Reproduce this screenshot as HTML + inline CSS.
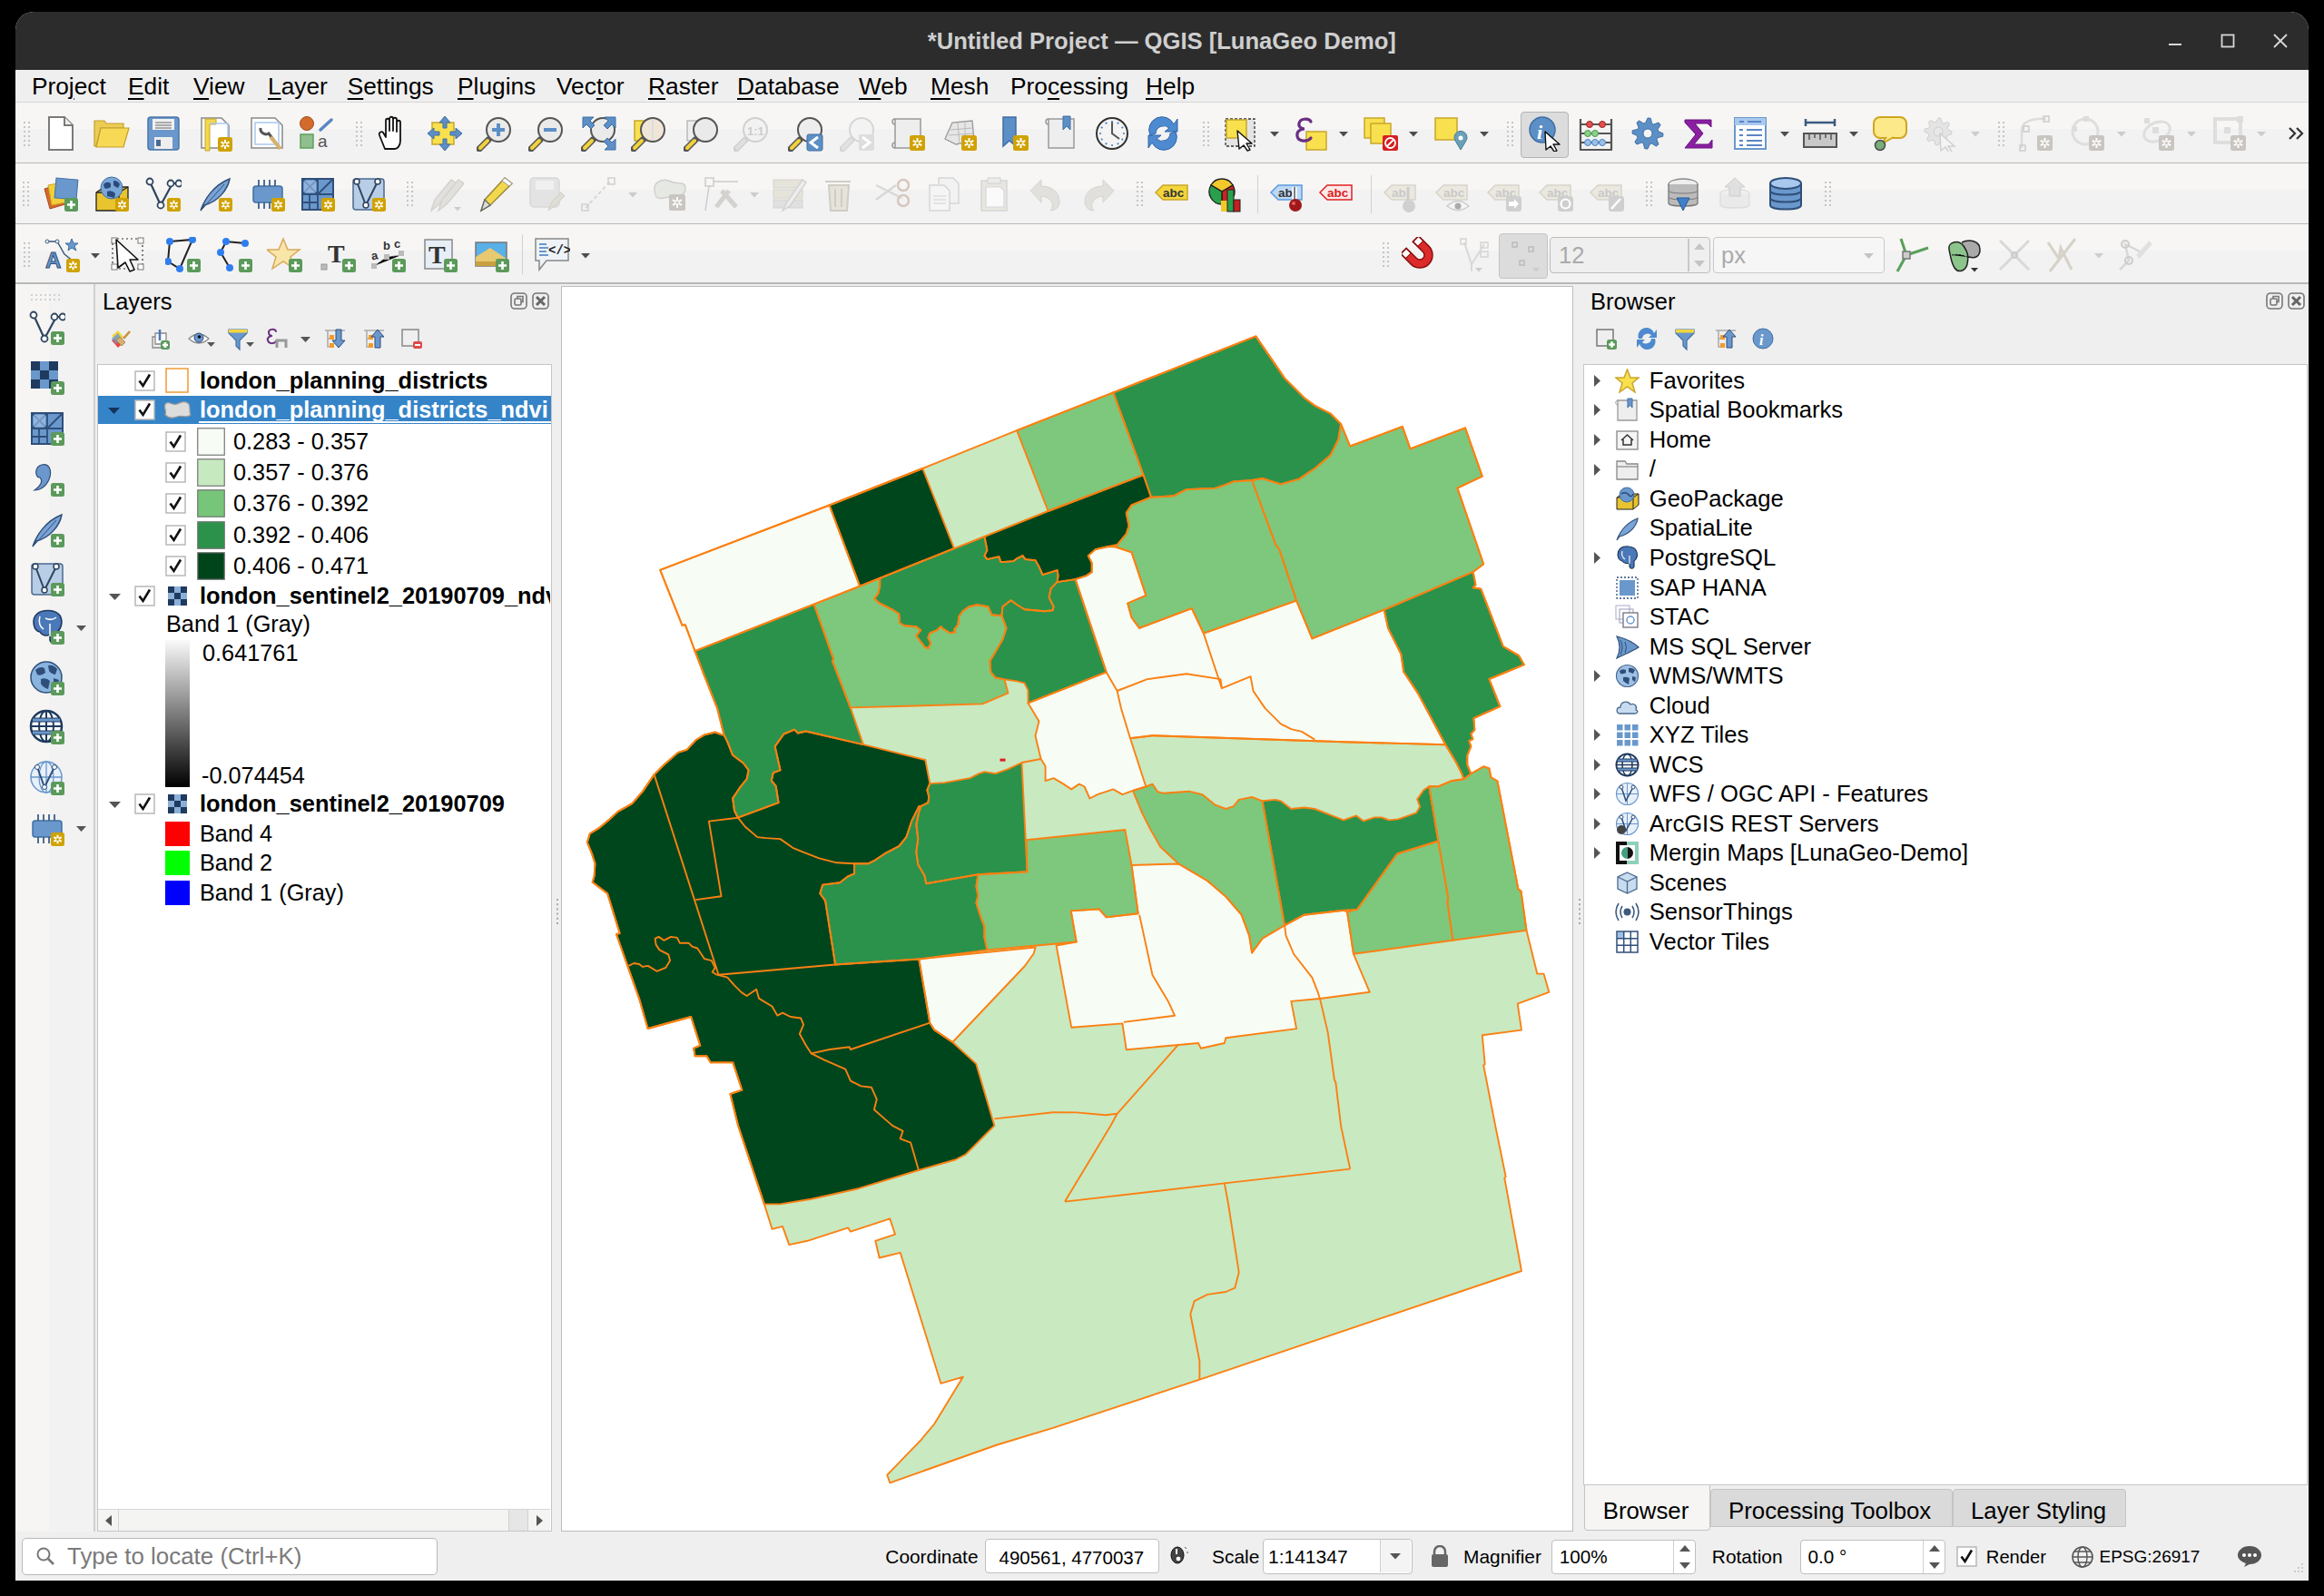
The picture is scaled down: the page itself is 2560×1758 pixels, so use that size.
<!DOCTYPE html>
<html><head><meta charset="utf-8"><style>
html,body{margin:0;padding:0;width:2560px;height:1758px;overflow:hidden;background:#000;font-family:"Liberation Sans", sans-serif;}
div{font-family:"Liberation Sans", sans-serif;}
</style></head><body>
<div style="position:absolute;left:17px;top:13px;width:2526px;height:1728px;background:#efefef;border-radius:20px 20px 0 0;overflow:hidden"></div><div style="position:absolute;left:17px;top:13px;width:2526px;height:64px;background:#2c2c2c;border-radius:20px 20px 0 0"></div><div style="position:absolute;left:1021.7px;top:20.4px;height:51.2px;font-size:25.6px;line-height:51.2px;color:#cfcfcf;font-weight:bold;white-space:nowrap;">*Untitled Project — QGIS [LunaGeo Demo]</div><svg style="position:absolute;left:2388px;top:35px;" width="18" height="18" viewBox="0 0 18 18"><line x1="1" y1="14" x2="15" y2="14" stroke="#d8d8d8" stroke-width="2"/></svg><svg style="position:absolute;left:2446px;top:37px;" width="16" height="16" viewBox="0 0 16 16"><rect x="1.5" y="1.5" width="13" height="13" fill="none" stroke="#d8d8d8" stroke-width="1.8"/></svg><svg style="position:absolute;left:2504px;top:37px;" width="16" height="16" viewBox="0 0 16 16"><path d="M1 1L15 15M15 1L1 15" stroke="#d8d8d8" stroke-width="1.8"/></svg><div style="position:absolute;left:34.9px;top:68.7px;height:52.6px;font-size:26.3px;line-height:52.6px;color:#000;font-weight:normal;white-space:nowrap;">Pro<u style="text-decoration-thickness:2px;text-underline-offset:4px">j</u>ect</div><div style="position:absolute;left:141px;top:68.7px;height:52.6px;font-size:26.3px;line-height:52.6px;color:#000;font-weight:normal;white-space:nowrap;"><u style="text-decoration-thickness:2px;text-underline-offset:4px">E</u>dit</div><div style="position:absolute;left:213px;top:68.7px;height:52.6px;font-size:26.3px;line-height:52.6px;color:#000;font-weight:normal;white-space:nowrap;"><u style="text-decoration-thickness:2px;text-underline-offset:4px">V</u>iew</div><div style="position:absolute;left:295px;top:68.7px;height:52.6px;font-size:26.3px;line-height:52.6px;color:#000;font-weight:normal;white-space:nowrap;"><u style="text-decoration-thickness:2px;text-underline-offset:4px">L</u>ayer</div><div style="position:absolute;left:382.7px;top:68.7px;height:52.6px;font-size:26.3px;line-height:52.6px;color:#000;font-weight:normal;white-space:nowrap;"><u style="text-decoration-thickness:2px;text-underline-offset:4px">S</u>ettings</div><div style="position:absolute;left:504px;top:68.7px;height:52.6px;font-size:26.3px;line-height:52.6px;color:#000;font-weight:normal;white-space:nowrap;"><u style="text-decoration-thickness:2px;text-underline-offset:4px">P</u>lugins</div><div style="position:absolute;left:613px;top:68.7px;height:52.6px;font-size:26.3px;line-height:52.6px;color:#000;font-weight:normal;white-space:nowrap;">Vec<u style="text-decoration-thickness:2px;text-underline-offset:4px">t</u>or</div><div style="position:absolute;left:714px;top:68.7px;height:52.6px;font-size:26.3px;line-height:52.6px;color:#000;font-weight:normal;white-space:nowrap;"><u style="text-decoration-thickness:2px;text-underline-offset:4px">R</u>aster</div><div style="position:absolute;left:812px;top:68.7px;height:52.6px;font-size:26.3px;line-height:52.6px;color:#000;font-weight:normal;white-space:nowrap;"><u style="text-decoration-thickness:2px;text-underline-offset:4px">D</u>atabase</div><div style="position:absolute;left:946px;top:68.7px;height:52.6px;font-size:26.3px;line-height:52.6px;color:#000;font-weight:normal;white-space:nowrap;"><u style="text-decoration-thickness:2px;text-underline-offset:4px">W</u>eb</div><div style="position:absolute;left:1025px;top:68.7px;height:52.6px;font-size:26.3px;line-height:52.6px;color:#000;font-weight:normal;white-space:nowrap;"><u style="text-decoration-thickness:2px;text-underline-offset:4px">M</u>esh</div><div style="position:absolute;left:1113px;top:68.7px;height:52.6px;font-size:26.3px;line-height:52.6px;color:#000;font-weight:normal;white-space:nowrap;">Pro<u style="text-decoration-thickness:2px;text-underline-offset:4px">c</u>essing</div><div style="position:absolute;left:1262px;top:68.7px;height:52.6px;font-size:26.3px;line-height:52.6px;color:#000;font-weight:normal;white-space:nowrap;"><u style="text-decoration-thickness:2px;text-underline-offset:4px">H</u>elp</div><div style="position:absolute;left:17px;top:113px;width:2526px;height:200px;background:#f2f2f2"></div><div style="position:absolute;left:17px;top:113px;width:2526px;height:29px;background:#f7f6f4"></div><div style="position:absolute;left:17px;top:180px;width:2526px;height:29px;background:#f7f6f4"></div><div style="position:absolute;left:17px;top:247px;width:2526px;height:29px;background:#f7f6f4"></div><div style="position:absolute;left:17px;top:111.8px;width:2526px;height:1.2px;background:#d6d6d6"></div><div style="position:absolute;left:17px;top:178.6px;width:2526px;height:1.6px;background:#b9b9b9"></div><div style="position:absolute;left:17px;top:245.6px;width:2526px;height:1.6px;background:#b9b9b9"></div><div style="position:absolute;left:17px;top:311px;width:2526px;height:1.6px;background:#b9b9b9"></div><div style="position:absolute;left:1675px;top:122.5px;width:53px;height:51.5px;background:#dcdcdc;border:1.5px solid #b4b4b4;border-radius:4px;box-sizing:border-box"></div><svg style="position:absolute;left:1681.5px;top:127.0px" width="40" height="40" viewBox="0 0 40 40"><circle cx="17" cy="16" r="14" fill="#5c8fc6" stroke="#3f6fa4" stroke-width="1.5"/><text x="11" y="26" font-size="22" font-style="italic" font-weight="bold" font-family="Liberation Serif" fill="#fff">i</text><path d="M20 18L36 32L29 32L33 39L30 40L26 34L21 38Z" fill="#fff" stroke="#111" stroke-width="1.4" stroke-linejoin="round"/></svg><svg style="position:absolute;left:46.7px;top:127.0px" width="40" height="40" viewBox="0 0 40 40"><path d="M7 2H24L33 11V38H7Z" fill="#fff" stroke="#7a7a7a" stroke-width="2"/><path d="M24 2V11H33" fill="#eee" stroke="#7a7a7a" stroke-width="2"/></svg><svg style="position:absolute;left:103.1px;top:127.0px" width="40" height="40" viewBox="0 0 40 40"><path d="M1 6H12L14 9H33V14H8L3 34H1Z" fill="#eccc54" stroke="#c39f2c" stroke-width="1.2"/><path d="M8 14H39L33 35H3Z" fill="#f7d955" stroke="#c39f2c" stroke-width="1.2"/></svg><svg style="position:absolute;left:160.0px;top:127.0px" width="40" height="40" viewBox="0 0 40 40"><rect x="3" y="2" width="34" height="36" rx="3" fill="#6a98cc" stroke="#4b76a6" stroke-width="1.5"/><rect x="8" y="4" width="24" height="12" fill="#f0f0f0"/><path d="M11 8H29M11 11H29M11 14H29" stroke="#666" stroke-width="1.2"/><rect x="10" y="24" width="20" height="13" fill="#eee"/><rect x="12" y="27" width="5" height="7" fill="#4b6a94"/></svg><svg style="position:absolute;left:217.3px;top:127.0px" width="40" height="40" viewBox="0 0 40 40"><path d="M5 3H27L35 11V36H5Z" fill="#fff" stroke="#888" stroke-width="1.5"/><path d="M9 4H21V10H14V39H9Z" fill="#f3d84d" stroke="#c9a72b" stroke-width="1"/><path d="M14 9H34V30" fill="none" stroke="#a8c8ee" stroke-width="1.5"/><rect x="23" y="24" width="16" height="16" rx="2.5" fill="#d0a200"/><path d="M31.0 26.88V37.12M26.5456 29.44L35.4544 34.56M26.5456 34.56L35.4544 29.44" stroke="#fff" stroke-width="2"/><circle cx="31.0" cy="32.0" r="1.6" fill="#d0a200"/></svg><svg style="position:absolute;left:273.7px;top:127.0px" width="40" height="40" viewBox="0 0 40 40"><path d="M3 3H29L37 11V36H3Z" fill="#fff" stroke="#888" stroke-width="1.5"/><rect x="7" y="8" width="26" height="24" fill="none" stroke="#a8c8ee" stroke-width="1.5"/><path d="M13 14A6 6 0 0 0 22 20L34 36" stroke="#555" stroke-width="3" fill="none"/><path d="M24 24L35 37" stroke="#d9b26a" stroke-width="4"/></svg><svg style="position:absolute;left:329.2px;top:127.0px" width="40" height="40" viewBox="0 0 40 40"><circle cx="9" cy="9" r="7.5" fill="#d26b2b" stroke="#a04e1e" stroke-width="1"/><path d="M24 16L36 5" stroke="#5a86c4" stroke-width="3.5" stroke-linecap="round"/><rect x="2" y="21" width="14" height="15" fill="#8fbf8f" stroke="#5f9f5f" stroke-width="1.5"/><text x="21" y="35" font-size="19" font-family="Liberation Sans" fill="#555">a</text></svg><svg style="position:absolute;left:414.4px;top:127.0px" width="40" height="40" viewBox="0 0 40 40"><path d="M10 37L4 22C3 19 6 17 8 19L11 24V6C11 3 15 3 15 6V17V4C15 1 19 1 19 4V17V5C19 2 23 2 23 5V18V8C23 5 27 5 27 8V28C27 33 24 37 21 37Z" fill="#fff" stroke="#111" stroke-width="1.8" stroke-linejoin="round"/></svg><svg style="position:absolute;left:469.8px;top:127.0px" width="40" height="40" viewBox="0 0 40 40"><rect x="6" y="8" width="24" height="24" fill="#f8e04e" stroke="#c9a72b" stroke-width="1.5"/><path d="M20 1L26 8H22V14H18V8H14Z M20 39L26 32H22V26H18V32H14Z M1 20L8 14V18H14V22H8V26Z M39 20L32 14V18H26V22H32V26Z" fill="#5c8fc6" stroke="#3f6fa4" stroke-width="1"/></svg><svg style="position:absolute;left:525.4px;top:127.0px" width="40" height="40" viewBox="0 0 40 40"><path d="M3 37L13 27" stroke="#555" stroke-width="7" stroke-linecap="round"/><path d="M4 36L12 28" stroke="#f1d23b" stroke-width="4" stroke-linecap="round"/><circle cx="24" cy="16" r="13" fill="#eaeaea" stroke="#555" stroke-width="2"/><path d="M24 9V23M17 16H31" stroke="#5c8fc6" stroke-width="4"/></svg><svg style="position:absolute;left:582.2px;top:127.0px" width="40" height="40" viewBox="0 0 40 40"><path d="M3 37L13 27" stroke="#555" stroke-width="7" stroke-linecap="round"/><path d="M4 36L12 28" stroke="#f1d23b" stroke-width="4" stroke-linecap="round"/><circle cx="24" cy="16" r="13" fill="#eaeaea" stroke="#555" stroke-width="2"/><path d="M17 16H31" stroke="#5c8fc6" stroke-width="4"/></svg><svg style="position:absolute;left:640.0px;top:127.0px" width="40" height="40" viewBox="0 0 40 40"><path d="M3 37L13 27" stroke="#555" stroke-width="7" stroke-linecap="round"/><path d="M4 36L12 28" stroke="#f1d23b" stroke-width="4" stroke-linecap="round"/><circle cx="24" cy="16" r="13" fill="#eaeaea" stroke="#555" stroke-width="2"/><path d="M2 2H14L10 6L15 11L11 15L6 10L2 14Z M38 2H26L30 6L25 11L29 15L34 10L38 14Z M38 38H26L30 34L25 29L29 25L34 30L38 26Z" fill="#5c8fc6" stroke="#3f6fa4"/></svg><svg style="position:absolute;left:695.0px;top:127.0px" width="40" height="40" viewBox="0 0 40 40"><rect x="4" y="6" width="16" height="22" fill="#f8e04e" stroke="#c9a72b" stroke-width="1.5"/><path d="M3 37L13 27" stroke="#555" stroke-width="7" stroke-linecap="round"/><path d="M4 36L12 28" stroke="#f1d23b" stroke-width="4" stroke-linecap="round"/><circle cx="24" cy="16" r="13" fill="#efe6d8" stroke="#555" stroke-width="2"/><path d="M24 5V27" stroke="#ddd" stroke-width="2"/></svg><svg style="position:absolute;left:752.6px;top:127.0px" width="40" height="40" viewBox="0 0 40 40"><rect x="4" y="6" width="16" height="22" fill="#eee" stroke="#bbb" stroke-width="1.5"/><path d="M3 37L13 27" stroke="#555" stroke-width="7" stroke-linecap="round"/><path d="M4 36L12 28" stroke="#f1d23b" stroke-width="4" stroke-linecap="round"/><circle cx="24" cy="16" r="13" fill="#eaeaea" stroke="#555" stroke-width="2"/></svg><svg style="position:absolute;left:808.3px;top:127.0px" width="40" height="40" viewBox="0 0 40 40"><path d="M3 37L13 27" stroke="#d0d0d0" stroke-width="7" stroke-linecap="round"/><path d="M4 36L12 28" stroke="#e0e0e0" stroke-width="4" stroke-linecap="round"/><circle cx="24" cy="16" r="13" fill="#f2f2f2" stroke="#d0d0d0" stroke-width="2"/><text x="15" y="22" font-size="13" font-weight="bold" font-family="Liberation Sans" fill="#ccc">1:1</text></svg><svg style="position:absolute;left:867.6px;top:127.0px" width="40" height="40" viewBox="0 0 40 40"><path d="M3 37L13 27" stroke="#555" stroke-width="7" stroke-linecap="round"/><path d="M4 36L12 28" stroke="#f1d23b" stroke-width="4" stroke-linecap="round"/><circle cx="24" cy="16" r="13" fill="#ededed" stroke="#555" stroke-width="2"/><rect x="21" y="21" width="17" height="18" rx="2" fill="#5c8fc6" stroke="#3f6fa4"/><path d="M33 24L25 30L33 36" stroke="#fff" stroke-width="3" fill="none"/></svg><svg style="position:absolute;left:924.5px;top:127.0px" width="40" height="40" viewBox="0 0 40 40"><path d="M3 37L13 27" stroke="#d6d6d6" stroke-width="7" stroke-linecap="round"/><path d="M4 36L12 28" stroke="#e2e2e2" stroke-width="4" stroke-linecap="round"/><circle cx="24" cy="16" r="13" fill="#f3f3f3" stroke="#d6d6d6" stroke-width="2"/><rect x="21" y="21" width="17" height="18" rx="2" fill="#ddd"/><path d="M25 24L33 30L25 36" stroke="#fff" stroke-width="3" fill="none"/></svg><svg style="position:absolute;left:980.3px;top:127.0px" width="40" height="40" viewBox="0 0 40 40"><path d="M6 4H34V36H6Z" fill="#eee" stroke="#999" stroke-width="1.5"/><path d="M6 4C2 4 2 10 6 10M6 30C2 30 2 36 6 36" fill="none" stroke="#999" stroke-width="1.5"/><rect x="22" y="22" width="17" height="17" rx="2.5" fill="#d0a200"/><path d="M30.5 25.06V35.94M25.7672 27.78L35.2328 33.22M25.7672 33.22L35.2328 27.78" stroke="#fff" stroke-width="2"/><circle cx="30.5" cy="30.5" r="1.6" fill="#d0a200"/></svg><svg style="position:absolute;left:1037.2px;top:127.0px" width="40" height="40" viewBox="0 0 40 40"><path d="M4 26L12 8L34 6L36 28L16 32Z" fill="#e6e6e6" stroke="#999" stroke-width="1.3"/><path d="M10 16L34 14M8 22L35 20M18 8L20 32M26 7L26 30" stroke="#bbb" stroke-width="1"/><rect x="22" y="22" width="17" height="17" rx="2.5" fill="#d0a200"/><path d="M30.5 25.06V35.94M25.7672 27.78L35.2328 33.22M25.7672 33.22L35.2328 27.78" stroke="#fff" stroke-width="2"/><circle cx="30.5" cy="30.5" r="1.6" fill="#d0a200"/></svg><svg style="position:absolute;left:1096.4px;top:127.0px" width="40" height="40" viewBox="0 0 40 40"><path d="M9 2H23V34L16 28L9 34Z" fill="#5c8fc6" stroke="#3f6fa4" stroke-width="1.5"/><rect x="20" y="22" width="17" height="17" rx="2.5" fill="#d0a200"/><path d="M28.5 25.06V35.94M23.7672 27.78L33.2328 33.22M23.7672 33.22L33.2328 27.78" stroke="#fff" stroke-width="2"/><circle cx="28.5" cy="30.5" r="1.6" fill="#d0a200"/></svg><svg style="position:absolute;left:1148.7px;top:127.0px" width="40" height="40" viewBox="0 0 40 40"><path d="M6 4H34V36H6Z" fill="#eee" stroke="#999" stroke-width="1.5"/><path d="M6 4C2 4 2 10 6 10" fill="none" stroke="#999" stroke-width="1.5"/><path d="M22 1H30V16L26 12L22 16Z" fill="#5c8fc6" stroke="#3f6fa4"/></svg><svg style="position:absolute;left:1204.5px;top:127.0px" width="40" height="40" viewBox="0 0 40 40"><circle cx="20" cy="20" r="17" fill="#f4f4f4" stroke="#333" stroke-width="2"/><path d="M20 7V20L28 26" stroke="#555" stroke-width="2" fill="none"/><circle cx="33.0" cy="20.0" r="1.1" fill="#4a7fc0"/><circle cx="31.3" cy="26.5" r="1.1" fill="#4a7fc0"/><circle cx="26.5" cy="31.3" r="1.1" fill="#4a7fc0"/><circle cx="20.0" cy="33.0" r="1.1" fill="#4a7fc0"/><circle cx="13.5" cy="31.3" r="1.1" fill="#4a7fc0"/><circle cx="8.7" cy="26.5" r="1.1" fill="#4a7fc0"/><circle cx="7.0" cy="20.0" r="1.1" fill="#4a7fc0"/><circle cx="8.7" cy="13.5" r="1.1" fill="#4a7fc0"/><circle cx="13.5" cy="8.7" r="1.1" fill="#4a7fc0"/><circle cx="20.0" cy="7.0" r="1.1" fill="#4a7fc0"/><circle cx="26.5" cy="8.7" r="1.1" fill="#4a7fc0"/><circle cx="31.3" cy="13.5" r="1.1" fill="#4a7fc0"/></svg><svg style="position:absolute;left:1261.4px;top:127.0px" width="40" height="40" viewBox="0 0 40 40"><path d="M6 22A14 14 0 0 1 32 10L36 4V18H22L27 14A9 9 0 0 0 12 20Z" fill="#4d8ad0" stroke="#2f66a8" stroke-width="1"/><path d="M34 18A14 14 0 0 1 8 30L4 36V22H18L13 26A9 9 0 0 0 28 20Z" fill="#4d8ad0" stroke="#2f66a8" stroke-width="1"/></svg><svg style="position:absolute;left:1346.5px;top:127.0px" width="40" height="40" viewBox="0 0 40 40"><rect x="3" y="4" width="32" height="30" fill="#e4e4e4" stroke="#333" stroke-width="1.3" stroke-dasharray="3 2"/><rect x="4" y="5" width="22" height="20" fill="#f8e04e" stroke="#c9a72b" stroke-width="1.5"/><path d="M16 17L32 31L26 31L30 38L27 39L23 33L18 37Z" fill="#fff" stroke="#111" stroke-width="1.4" stroke-linejoin="round"/></svg><svg style="position:absolute;left:1423.1px;top:127.0px" width="40" height="40" viewBox="0 0 40 40"><rect x="16" y="18" width="22" height="20" fill="#f8e04e" stroke="#c9a72b" stroke-width="1.5"/><path d="M21 7C19 3 9 3 8 9C7 13 11 15 14 15C9 15 5 18 6 23C7 29 17 30 21 25" fill="none" stroke="#6a2e82" stroke-width="3.2" stroke-linecap="round"/></svg><svg style="position:absolute;left:1501.0px;top:127.0px" width="40" height="40" viewBox="0 0 40 40"><rect x="2" y="3" width="22" height="22" fill="#f8e04e" stroke="#c9a72b" stroke-width="1.5"/><rect x="9" y="9" width="22" height="22" fill="#f8e04e" stroke="#c9a72b" stroke-width="1.5"/><rect x="22" y="22" width="17" height="17" rx="2" fill="#d42020"/><circle cx="30.5" cy="30.5" r="5.5" fill="none" stroke="#fff" stroke-width="1.8"/><path d="M27 34L34 27" stroke="#fff" stroke-width="1.8"/></svg><svg style="position:absolute;left:1577.6px;top:127.0px" width="40" height="40" viewBox="0 0 40 40"><rect x="3" y="3" width="24" height="24" fill="#f8e04e" stroke="#c9a72b" stroke-width="1.5"/><path d="M31 38L25 28A7 7 0 1 1 37 28Z" fill="#6aa0b8" stroke="#4a7f96"/><circle cx="31" cy="25" r="2.5" fill="#fff"/></svg><svg style="position:absolute;left:1738.0px;top:127.0px" width="40" height="40" viewBox="0 0 40 40"><path d="M3 4V38M37 4V38M2 38H38M3 10H37M3 20H37M3 30H37" stroke="#555" stroke-width="2.2" fill="none"/><circle cx="13" cy="10" r="3.5" fill="#e05050" stroke="#a02020"/><circle cx="27" cy="10" r="3.5" fill="#e05050" stroke="#a02020"/><circle cx="11" cy="20" r="3.5" fill="#8ccf8c" stroke="#4a9a4a"/><circle cx="19" cy="20" r="3.5" fill="#8ccf8c" stroke="#4a9a4a"/><circle cx="11" cy="30" r="3.5" fill="#9cc0e8" stroke="#4a7fc0"/><circle cx="19" cy="30" r="3.5" fill="#9cc0e8" stroke="#4a7fc0"/><circle cx="27" cy="30" r="3.5" fill="#9cc0e8" stroke="#4a7fc0"/></svg><svg style="position:absolute;left:1794.9px;top:127.0px" width="40" height="40" viewBox="0 0 40 40"><polygon points="37.0,20.0 36.7,23.3 31.1,24.6 30.0,26.7 32.0,32.0 29.4,34.1 24.6,31.1 22.3,31.8 20.0,37.0 16.7,36.7 15.4,31.1 13.3,30.0 8.0,32.0 5.9,29.4 8.9,24.6 8.2,22.3 3.0,20.0 3.3,16.7 8.9,15.4 10.0,13.3 8.0,8.0 10.6,5.9 15.4,8.9 17.7,8.2 20.0,3.0 23.3,3.3 24.6,8.9 26.7,10.0 32.0,8.0 34.1,10.6 31.1,15.4 31.8,17.7" fill="#5c8fc6" stroke="#3f6fa4" stroke-width="1" stroke-linejoin="round"/><circle cx="20" cy="20" r="5" fill="#f5f5f4" stroke="#3f6fa4"/></svg><svg style="position:absolute;left:1851.4px;top:127.0px" width="40" height="40" viewBox="0 0 40 40"><path d="M5 5H34V13L30 9H16L25 20L15 32H31L35 27V36H5L17 21L5 8Z" fill="#8b1fa0" stroke="#6a1080" stroke-width="1"/></svg><svg style="position:absolute;left:1907.8px;top:127.0px" width="40" height="40" viewBox="0 0 40 40"><rect x="3" y="3" width="34" height="34" fill="#fff" stroke="#6a98cc" stroke-width="2"/><rect x="3" y="3" width="34" height="8" fill="#a8c8ee"/><path d="M8 7H13M17 7H32M8 16H12M16 16H33M8 22H12M16 22H33M8 28H12M16 28H33M8 33H12M16 33H33" stroke="#5a86c4" stroke-width="2"/></svg><svg style="position:absolute;left:1985.0px;top:127.0px" width="40" height="40" viewBox="0 0 40 40"><path d="M4 8H36M4 4V12M36 4V12" stroke="#3c5a80" stroke-width="2.5"/><rect x="2" y="20" width="36" height="15" fill="#c8c8c8" stroke="#555" stroke-width="2"/><path d="M8 20V27M14 20V25M20 20V27M26 20V25M32 20V27" stroke="#555" stroke-width="1.5"/></svg><svg style="position:absolute;left:2061.6px;top:127.0px" width="40" height="40" viewBox="0 0 40 40"><rect x="2" y="2" width="36" height="23" rx="7" fill="#fbe98a" stroke="#d0a520" stroke-width="2"/><path d="M16 24L10 32L24 24" fill="#fbe98a" stroke="#d0a520" stroke-width="2"/><circle cx="9" cy="33" r="5.5" fill="#79ad79" stroke="#4a4a4a" stroke-width="1.5"/></svg><svg style="position:absolute;left:2117.4px;top:127.0px" width="40" height="40" viewBox="0 0 40 40"><polygon points="33.0,18.0 32.7,20.9 28.2,22.2 27.1,24.1 28.6,28.6 26.3,30.5 22.2,28.2 20.1,28.8 18.0,33.0 15.1,32.7 13.8,28.2 11.9,27.1 7.4,28.6 5.5,26.3 7.8,22.2 7.2,20.1 3.0,18.0 3.3,15.1 7.8,13.8 8.9,11.9 7.4,7.4 9.7,5.5 13.8,7.8 15.9,7.2 18.0,3.0 20.9,3.3 22.2,7.8 24.1,8.9 28.6,7.4 30.5,9.7 28.2,13.8 28.8,15.9" fill="#e4e4e4" stroke="#cfcfcf" stroke-width="1" stroke-linejoin="round"/><circle cx="18" cy="18" r="5" fill="#e8e8e8" stroke="#cfcfcf"/><path d="M20 20L36 34L29 34L33 40L30 41L26 35L21 39Z" fill="#f4f4f4" stroke="#cfcfcf" stroke-width="1.4"/></svg><svg style="position:absolute;left:2222.0px;top:127.0px" width="40" height="40" viewBox="0 0 40 40"><path d="M5 36V16C5 8 15 3 32 4" fill="none" stroke="#dcdcdc" stroke-width="2.5"/><rect x="3" y="33" width="6" height="6" fill="none" stroke="#ccc" stroke-width="1.5"/><rect x="7" y="12" width="6" height="6" fill="none" stroke="#ccc" stroke-width="1.5"/><rect x="29" y="1" width="6" height="6" fill="none" stroke="#ccc" stroke-width="1.5"/><rect x="22" y="22" width="17" height="17" rx="2.5" fill="#c9c5c0"/><path d="M30.5 25.06V35.94M25.7672 27.78L35.2328 33.22M25.7672 33.22L35.2328 27.78" stroke="#fff" stroke-width="2"/><circle cx="30.5" cy="30.5" r="1.6" fill="#c9c5c0"/></svg><svg style="position:absolute;left:2278.9px;top:127.0px" width="40" height="40" viewBox="0 0 40 40"><circle cx="18" cy="18" r="14" fill="none" stroke="#dedede" stroke-width="3"/><rect x="3" y="12" width="6" height="6" fill="#ddd"/><rect x="16" y="1" width="6" height="6" fill="#ddd"/><rect x="22" y="22" width="17" height="17" rx="2.5" fill="#c9c5c0"/><path d="M30.5 25.06V35.94M25.7672 27.78L35.2328 33.22M25.7672 33.22L35.2328 27.78" stroke="#fff" stroke-width="2"/><circle cx="30.5" cy="30.5" r="1.6" fill="#c9c5c0"/></svg><svg style="position:absolute;left:2355.9px;top:127.0px" width="40" height="40" viewBox="0 0 40 40"><ellipse cx="20" cy="18" rx="15" ry="10" transform="rotate(-25 20 18)" fill="none" stroke="#dedede" stroke-width="3"/><rect x="15" y="13" width="7" height="7" fill="#ddd"/><rect x="6" y="3" width="6" height="6" fill="#ddd"/><rect x="22" y="22" width="17" height="17" rx="2.5" fill="#c9c5c0"/><path d="M30.5 25.06V35.94M25.7672 27.78L35.2328 33.22M25.7672 33.22L35.2328 27.78" stroke="#fff" stroke-width="2"/><circle cx="30.5" cy="30.5" r="1.6" fill="#c9c5c0"/></svg><svg style="position:absolute;left:2435.0px;top:127.0px" width="40" height="40" viewBox="0 0 40 40"><rect x="5" y="4" width="28" height="26" fill="none" stroke="#dedede" stroke-width="4"/><rect x="15" y="13" width="7" height="7" fill="#ddd"/><rect x="29" y="1" width="7" height="7" fill="#ddd"/><rect x="22" y="22" width="17" height="17" rx="2.5" fill="#c9c5c0"/><path d="M30.5 25.06V35.94M25.7672 27.78L35.2328 33.22M25.7672 33.22L35.2328 27.78" stroke="#fff" stroke-width="2"/><circle cx="30.5" cy="30.5" r="1.6" fill="#c9c5c0"/></svg><svg style="position:absolute;left:1398.6px;top:145.0px" width="10" height="6.0" viewBox="0 0 10 6.0"><path d="M0 0H10L5.0 5.5Z" fill="#4d4d4d"/></svg><svg style="position:absolute;left:1475.3px;top:145.0px" width="10" height="6.0" viewBox="0 0 10 6.0"><path d="M0 0H10L5.0 5.5Z" fill="#4d4d4d"/></svg><svg style="position:absolute;left:1552.0px;top:145.0px" width="10" height="6.0" viewBox="0 0 10 6.0"><path d="M0 0H10L5.0 5.5Z" fill="#4d4d4d"/></svg><svg style="position:absolute;left:1629.8px;top:145.0px" width="10" height="6.0" viewBox="0 0 10 6.0"><path d="M0 0H10L5.0 5.5Z" fill="#4d4d4d"/></svg><svg style="position:absolute;left:1960.5px;top:145.0px" width="10" height="6.0" viewBox="0 0 10 6.0"><path d="M0 0H10L5.0 5.5Z" fill="#4d4d4d"/></svg><svg style="position:absolute;left:2037.0px;top:145.0px" width="10" height="6.0" viewBox="0 0 10 6.0"><path d="M0 0H10L5.0 5.5Z" fill="#4d4d4d"/></svg><svg style="position:absolute;left:2170.7px;top:145.0px" width="10" height="6.0" viewBox="0 0 10 6.0"><path d="M0 0H10L5.0 5.5Z" fill="#cccccc"/></svg><svg style="position:absolute;left:2332.2px;top:145.0px" width="10" height="6.0" viewBox="0 0 10 6.0"><path d="M0 0H10L5.0 5.5Z" fill="#cccccc"/></svg><svg style="position:absolute;left:2409.4px;top:145.0px" width="10" height="6.0" viewBox="0 0 10 6.0"><path d="M0 0H10L5.0 5.5Z" fill="#cccccc"/></svg><svg style="position:absolute;left:2486.3px;top:145.0px" width="10" height="6.0" viewBox="0 0 10 6.0"><path d="M0 0H10L5.0 5.5Z" fill="#cccccc"/></svg><svg style="position:absolute;left:23.5px;top:131.5px" width="11" height="31" viewBox="0 0 11 31"><circle cx="3" cy="3" r="1.1" fill="#b9b9b9"/><circle cx="8" cy="3" r="1.1" fill="#b9b9b9"/><circle cx="3" cy="8" r="1.1" fill="#b9b9b9"/><circle cx="8" cy="8" r="1.1" fill="#b9b9b9"/><circle cx="3" cy="13" r="1.1" fill="#b9b9b9"/><circle cx="8" cy="13" r="1.1" fill="#b9b9b9"/><circle cx="3" cy="18" r="1.1" fill="#b9b9b9"/><circle cx="8" cy="18" r="1.1" fill="#b9b9b9"/><circle cx="3" cy="23" r="1.1" fill="#b9b9b9"/><circle cx="8" cy="23" r="1.1" fill="#b9b9b9"/><circle cx="3" cy="28" r="1.1" fill="#b9b9b9"/><circle cx="8" cy="28" r="1.1" fill="#b9b9b9"/></svg><svg style="position:absolute;left:390.0px;top:131.5px" width="11" height="31" viewBox="0 0 11 31"><circle cx="3" cy="3" r="1.1" fill="#b9b9b9"/><circle cx="8" cy="3" r="1.1" fill="#b9b9b9"/><circle cx="3" cy="8" r="1.1" fill="#b9b9b9"/><circle cx="8" cy="8" r="1.1" fill="#b9b9b9"/><circle cx="3" cy="13" r="1.1" fill="#b9b9b9"/><circle cx="8" cy="13" r="1.1" fill="#b9b9b9"/><circle cx="3" cy="18" r="1.1" fill="#b9b9b9"/><circle cx="8" cy="18" r="1.1" fill="#b9b9b9"/><circle cx="3" cy="23" r="1.1" fill="#b9b9b9"/><circle cx="8" cy="23" r="1.1" fill="#b9b9b9"/><circle cx="3" cy="28" r="1.1" fill="#b9b9b9"/><circle cx="8" cy="28" r="1.1" fill="#b9b9b9"/></svg><svg style="position:absolute;left:1322.5px;top:131.5px" width="11" height="31" viewBox="0 0 11 31"><circle cx="3" cy="3" r="1.1" fill="#b9b9b9"/><circle cx="8" cy="3" r="1.1" fill="#b9b9b9"/><circle cx="3" cy="8" r="1.1" fill="#b9b9b9"/><circle cx="8" cy="8" r="1.1" fill="#b9b9b9"/><circle cx="3" cy="13" r="1.1" fill="#b9b9b9"/><circle cx="8" cy="13" r="1.1" fill="#b9b9b9"/><circle cx="3" cy="18" r="1.1" fill="#b9b9b9"/><circle cx="8" cy="18" r="1.1" fill="#b9b9b9"/><circle cx="3" cy="23" r="1.1" fill="#b9b9b9"/><circle cx="8" cy="23" r="1.1" fill="#b9b9b9"/><circle cx="3" cy="28" r="1.1" fill="#b9b9b9"/><circle cx="8" cy="28" r="1.1" fill="#b9b9b9"/></svg><svg style="position:absolute;left:1658.4px;top:131.5px" width="11" height="31" viewBox="0 0 11 31"><circle cx="3" cy="3" r="1.1" fill="#b9b9b9"/><circle cx="8" cy="3" r="1.1" fill="#b9b9b9"/><circle cx="3" cy="8" r="1.1" fill="#b9b9b9"/><circle cx="8" cy="8" r="1.1" fill="#b9b9b9"/><circle cx="3" cy="13" r="1.1" fill="#b9b9b9"/><circle cx="8" cy="13" r="1.1" fill="#b9b9b9"/><circle cx="3" cy="18" r="1.1" fill="#b9b9b9"/><circle cx="8" cy="18" r="1.1" fill="#b9b9b9"/><circle cx="3" cy="23" r="1.1" fill="#b9b9b9"/><circle cx="8" cy="23" r="1.1" fill="#b9b9b9"/><circle cx="3" cy="28" r="1.1" fill="#b9b9b9"/><circle cx="8" cy="28" r="1.1" fill="#b9b9b9"/></svg><svg style="position:absolute;left:2199.3px;top:131.5px" width="11" height="31" viewBox="0 0 11 31"><circle cx="3" cy="3" r="1.1" fill="#b9b9b9"/><circle cx="8" cy="3" r="1.1" fill="#b9b9b9"/><circle cx="3" cy="8" r="1.1" fill="#b9b9b9"/><circle cx="8" cy="8" r="1.1" fill="#b9b9b9"/><circle cx="3" cy="13" r="1.1" fill="#b9b9b9"/><circle cx="8" cy="13" r="1.1" fill="#b9b9b9"/><circle cx="3" cy="18" r="1.1" fill="#b9b9b9"/><circle cx="8" cy="18" r="1.1" fill="#b9b9b9"/><circle cx="3" cy="23" r="1.1" fill="#b9b9b9"/><circle cx="8" cy="23" r="1.1" fill="#b9b9b9"/><circle cx="3" cy="28" r="1.1" fill="#b9b9b9"/><circle cx="8" cy="28" r="1.1" fill="#b9b9b9"/></svg><svg style="position:absolute;left:2519.8px;top:138.0px" width="18" height="18" viewBox="0 0 18 18"><path d="M2 3L8 9L2 15M10 3L16 9L10 15" stroke="#333" stroke-width="2.2" fill="none"/></svg><svg style="position:absolute;left:47.0px;top:193.5px" width="40" height="40" viewBox="0 0 40 40"><path d="M2 14L22 8L28 30L8 36Z" fill="#d6672c" stroke="#a84c1e"/><path d="M6 10L26 6L30 28L10 32Z" fill="#f3cf3a" stroke="#c9a72b"/><path d="M14 3H38V25H14Z" fill="#6a98cc" stroke="#3f6fa4" transform="rotate(5 26 14)"/><rect x="24" y="24" width="15" height="15" rx="2.5" fill="#5b9a5b"/><path d="M31.5 27.0V36.0M27.0 31.5H36.0" stroke="#fff" stroke-width="2.6"/></svg><svg style="position:absolute;left:103.4px;top:193.5px" width="40" height="40" viewBox="0 0 40 40"><path d="M3 18L12 12H38V32L28 38H3Z" fill="#e8c42e" stroke="#222" stroke-width="1.3"/><path d="M3 18H28V38M28 18L38 12" fill="none" stroke="#222" stroke-width="1.3"/><circle cx="20" cy="13" r="12" fill="#7aa6d8" stroke="#3f6fa4"/><path d="M11 9Q15 5 19 8L19 12Q15 15 12 13Z M22 5Q27 5 29 9L27 13Q24 12 22 10Z M15 17Q20 15 24 19L23 24L15 22Z" fill="#2a4a7a"/><rect x="24" y="24" width="15" height="15" rx="2.5" fill="#d0a200"/><path d="M31.5 26.7V36.3M27.323999999999998 29.1L35.676 33.9M27.323999999999998 33.9L35.676 29.1" stroke="#fff" stroke-width="2"/><circle cx="31.5" cy="31.5" r="1.6" fill="#d0a200"/></svg><svg style="position:absolute;left:159.6px;top:193.5px" width="40" height="40" viewBox="0 0 40 40"><path d="M5 6L17 32L30 8L38 8" fill="none" stroke="#2f4560" stroke-width="2.2"/><circle cx="5" cy="6" r="3.5" fill="#fff" stroke="#2f4560" stroke-width="1.8"/><circle cx="17" cy="32" r="3.5" fill="#fff" stroke="#2f4560" stroke-width="1.8"/><circle cx="28" cy="8" r="3.5" fill="#fff" stroke="#2f4560" stroke-width="1.8"/><circle cx="37" cy="8" r="3.5" fill="#fff" stroke="#2f4560" stroke-width="1.8"/><rect x="24" y="24" width="15" height="15" rx="2.5" fill="#d0a200"/><path d="M31.5 26.7V36.3M27.323999999999998 29.1L35.676 33.9M27.323999999999998 33.9L35.676 29.1" stroke="#fff" stroke-width="2"/><circle cx="31.5" cy="31.5" r="1.6" fill="#d0a200"/></svg><svg style="position:absolute;left:216.6px;top:193.5px" width="40" height="40" viewBox="0 0 40 40"><path d="M4 38C8 26 18 10 36 3C34 14 24 28 8 32Z" fill="#7aa3d6" stroke="#2f4f7a" stroke-width="1.5"/><path d="M6 36L30 9" stroke="#2f4f7a" stroke-width="1"/><rect x="24" y="24" width="15" height="15" rx="2.5" fill="#d0a200"/><path d="M31.5 26.7V36.3M27.323999999999998 29.1L35.676 33.9M27.323999999999998 33.9L35.676 29.1" stroke="#fff" stroke-width="2"/><circle cx="31.5" cy="31.5" r="1.6" fill="#d0a200"/></svg><svg style="position:absolute;left:274.6px;top:193.5px" width="40" height="40" viewBox="0 0 40 40"><rect x="4" y="11" width="32" height="18" rx="3" fill="#6a98cc" stroke="#3f6fa4" stroke-width="1.5"/><path d="M10 4V11M16 4V11M22 4V11M28 4V11M10 29V36M16 29V36M22 29V36M28 29V36" stroke="#3f5f8a" stroke-width="1.8"/><rect x="24" y="24" width="15" height="15" rx="2.5" fill="#d0a200"/><path d="M31.5 26.7V36.3M27.323999999999998 29.1L35.676 33.9M27.323999999999998 33.9L35.676 29.1" stroke="#fff" stroke-width="2"/><circle cx="31.5" cy="31.5" r="1.6" fill="#d0a200"/></svg><svg style="position:absolute;left:330.4px;top:193.5px" width="40" height="40" viewBox="0 0 40 40"><rect x="3" y="3" width="34" height="34" fill="#6a98cc" stroke="#2f4f7a" stroke-width="2"/><path d="M3 3L20 20M20 3L3 20M20 20L37 3M3 20H37M20 3V37M3 29H20M11 20V37" stroke="#2f4f7a" stroke-width="1.8"/><rect x="5" y="5" width="13" height="13" fill="#a8c8ee" opacity=".6"/><rect x="24" y="24" width="15" height="15" rx="2.5" fill="#d0a200"/><path d="M31.5 26.7V36.3M27.323999999999998 29.1L35.676 33.9M27.323999999999998 33.9L35.676 29.1" stroke="#fff" stroke-width="2"/><circle cx="31.5" cy="31.5" r="1.6" fill="#d0a200"/></svg><svg style="position:absolute;left:386.2px;top:193.5px" width="40" height="40" viewBox="0 0 40 40"><rect x="3" y="3" width="34" height="34" rx="3" fill="#b8cde6" stroke="#4a6a90" stroke-width="1.5"/><path d="M7 6L17 32L30 6" fill="none" stroke="#2f4560" stroke-width="2"/><circle cx="7" cy="6" r="3" fill="#fff" stroke="#2f4560" stroke-width="1.5"/><circle cx="17" cy="32" r="3" fill="#fff" stroke="#2f4560" stroke-width="1.5"/><circle cx="30" cy="6" r="3" fill="#fff" stroke="#2f4560" stroke-width="1.5"/><rect x="24" y="24" width="15" height="15" rx="2.5" fill="#d0a200"/><path d="M31.5 26.7V36.3M27.323999999999998 29.1L35.676 33.9M27.323999999999998 33.9L35.676 29.1" stroke="#fff" stroke-width="2"/><circle cx="31.5" cy="31.5" r="1.6" fill="#d0a200"/></svg><svg style="position:absolute;left:471.0px;top:193.5px" width="40" height="40" viewBox="0 0 40 40"><path d="M4 38L8 26L26 4L32 8L14 30Z" fill="#e2e0dc" stroke="#d4d2ce" stroke-width="1.5"/><path d="M12 38L16 26L34 4L40 8L22 30Z" fill="#e2e0dc" stroke="#d4d2ce" stroke-width="1.5"/></svg><svg style="position:absolute;left:526.3px;top:193.5px" width="40" height="40" viewBox="0 0 40 40"><path d="M4 38L8 26L30 2L38 8L14 32Z" fill="#f3d84d" stroke="#9a8a3a" stroke-width="1.5"/><path d="M4 38L8 26L14 32Z" fill="#ddd" stroke="#666" stroke-width="1.3"/><path d="M30 2L38 8L35 11L27 5Z" fill="#fff" stroke="#999"/></svg><svg style="position:absolute;left:582.0px;top:193.5px" width="40" height="40" viewBox="0 0 40 40"><rect x="2" y="2" width="32" height="32" rx="4" fill="#e3e3e3" stroke="#d8d8d8" stroke-width="1.5"/><rect x="8" y="5" width="20" height="10" fill="#f0f0f0"/><path d="M22 38L26 28L36 18L40 22L30 32Z" fill="#e0ddd6" stroke="#d0cdc6"/></svg><svg style="position:absolute;left:640.1px;top:193.5px" width="40" height="40" viewBox="0 0 40 40"><path d="M5 35L33 5" stroke="#d6d6d6" stroke-width="2" stroke-dasharray="4 3"/><rect x="1" y="31" width="7" height="7" fill="none" stroke="#d0d0d0" stroke-width="1.5"/><rect x="30" y="2" width="7" height="7" fill="none" stroke="#d0d0d0" stroke-width="1.5"/></svg><svg style="position:absolute;left:716.8px;top:193.5px" width="40" height="40" viewBox="0 0 40 40"><path d="M4 16C2 6 14 2 22 6C30 10 38 4 38 14C38 24 24 22 14 24C6 26 5 22 4 16Z" fill="#e6e8e4" stroke="#d0d0d0" stroke-width="1.5"/><rect x="20" y="20" width="18" height="18" rx="2.5" fill="#c9c5c0"/><path d="M29.0 23.240000000000002V34.76M23.9888 26.12L34.0112 31.88M23.9888 31.88L34.0112 26.12" stroke="#fff" stroke-width="2"/><circle cx="29.0" cy="29.0" r="1.6" fill="#c9c5c0"/></svg><svg style="position:absolute;left:774.9px;top:193.5px" width="40" height="40" viewBox="0 0 40 40"><rect x="2" y="2" width="9" height="9" fill="none" stroke="#ccc" stroke-width="1.5"/><path d="M6 11L2 38M11 6H38" stroke="#ccc" stroke-width="1.5"/><path d="M14 34L28 16M20 16L36 34" stroke="#d4d2ce" stroke-width="5"/></svg><svg style="position:absolute;left:850.4px;top:193.5px" width="40" height="40" viewBox="0 0 40 40"><rect x="2" y="4" width="32" height="9" fill="#e6e3da" stroke="#d6d3cc"/><rect x="2" y="15" width="32" height="9" fill="#e6e3da" stroke="#d6d3cc"/><rect x="2" y="26" width="32" height="9" fill="#e0e0e0" stroke="#d6d3cc"/><path d="M12 38L16 30L34 4L38 7L20 33Z" fill="#ececec" stroke="#cfcfcf" stroke-width="1.3"/></svg><svg style="position:absolute;left:905.0px;top:193.5px" width="40" height="40" viewBox="0 0 40 40"><path d="M4 6H32M8 10H30L28 38H10Z" fill="#e6e3da" stroke="#d0cdc6" stroke-width="2"/><path d="M15 14V34M22 14V34" stroke="#d0cdc6" stroke-width="2"/></svg><svg style="position:absolute;left:963.0px;top:193.5px" width="40" height="40" viewBox="0 0 40 40"><path d="M2 10L30 24M2 26L24 10" stroke="#d8d8d8" stroke-width="2.5"/><circle cx="32" cy="10" r="6" fill="none" stroke="#d6c8c0" stroke-width="2.5"/><circle cx="32" cy="27" r="6" fill="none" stroke="#d6c8c0" stroke-width="2.5"/></svg><svg style="position:absolute;left:1020.0px;top:193.5px" width="40" height="40" viewBox="0 0 40 40"><path d="M14 2H30L36 8V30H14Z" fill="#f2f2f2" stroke="#d6d6d6" stroke-width="1.5"/><path d="M4 10H20L26 16V38H4Z" fill="#f5f5f5" stroke="#d6d6d6" stroke-width="1.5"/><path d="M8 22H22M8 26H22M8 30H22" stroke="#ddd" stroke-width="1.3"/></svg><svg style="position:absolute;left:1076.0px;top:193.5px" width="40" height="40" viewBox="0 0 40 40"><rect x="5" y="5" width="28" height="33" fill="#e8e6e0" stroke="#d6d6d6" stroke-width="1.5"/><rect x="12" y="2" width="14" height="6" fill="#ececec" stroke="#d0d0d0"/><path d="M10 12H26L30 16V34H10Z" fill="#fafafa" stroke="#d6d6d6" stroke-width="1.2"/></svg><svg style="position:absolute;left:1132.9px;top:193.5px" width="40" height="40" viewBox="0 0 40 40"><path d="M2 16L14 4V11C26 11 34 18 34 28C34 34 30 38 24 38C28 34 28 24 14 22V29Z" fill="#e2e0dc" stroke="#d6d4d0"/></svg><svg style="position:absolute;left:1188.7px;top:193.5px" width="40" height="40" viewBox="0 0 40 40"><path d="M38 16L26 4V11C14 11 6 18 6 28C6 34 10 38 16 38C12 34 12 24 26 22V29Z" fill="#e2e0dc" stroke="#d6d4d0"/></svg><svg style="position:absolute;left:1271.2px;top:193.5px" width="40" height="40" viewBox="0 0 40 40"><path d="M2 18L10 10H37V26H10Z" fill="#f3d53c" stroke="#c9a72b" stroke-width="1.5"/><text x="10" y="23" font-size="13.5" font-weight="bold" font-family="Liberation Sans" fill="#333">abc</text></svg><svg style="position:absolute;left:1330.4px;top:193.5px" width="40" height="40" viewBox="0 0 40 40"><path d="M16 17L3.9 10.0A14 14 0 0 1 28.1 10.0Z" fill="#f3c82a" stroke="#222" stroke-width="1.4"/><path d="M16 17L28.1 10.0A14 14 0 0 1 16.0 31.0Z" fill="#d42020" stroke="#222" stroke-width="1.4"/><path d="M16 17L16.0 31.0A14 14 0 0 1 3.9 10.0Z" fill="#29a04a" stroke="#222" stroke-width="1.4"/><rect x="15" y="27" width="7" height="12" fill="#f3c82a"/><rect x="22" y="15" width="7" height="24" fill="#29a04a" stroke="#222"/><rect x="29" y="26" width="7" height="13" fill="#c82020" stroke="#222"/></svg><svg style="position:absolute;left:1397.8px;top:193.5px" width="40" height="40" viewBox="0 0 40 40"><path d="M2 18L10 10H36V26H10Z" fill="#bcd8f5" stroke="#5a9ae0" stroke-width="1.5"/><text x="10" y="23" font-size="13.5" font-weight="bold" font-family="Liberation Sans" fill="#333">ab</text><path d="M28 12V28" stroke="#fff" stroke-width="5"/><path d="M28 12V28" stroke="#555" stroke-width="1.5"/><circle cx="29" cy="32" r="7" fill="#a01818"/><circle cx="27" cy="30" r="2" fill="#e06060"/></svg><svg style="position:absolute;left:1452.4px;top:193.5px" width="40" height="40" viewBox="0 0 40 40"><path d="M2 18L10 10H37V26H10Z" fill="#fbeaea" stroke="#e02020" stroke-width="1.5"/><text x="10" y="23" font-size="13.5" font-weight="bold" font-family="Liberation Sans" fill="#e02020">abc</text></svg><svg style="position:absolute;left:1523.0px;top:193.5px" width="40" height="40" viewBox="0 0 40 40"><path d="M2 18L10 10H36V26H10Z" fill="#ebe8e0" stroke="#d8d4cc" stroke-width="1.5"/><text x="10" y="23" font-size="13.5" font-weight="bold" font-family="Liberation Sans" fill="#c8c8c8">ab</text><path d="M28 12V28" stroke="#ccc" stroke-width="3"/><circle cx="29" cy="33" r="7" fill="#d0d0d0"/></svg><svg style="position:absolute;left:1579.9px;top:193.5px" width="40" height="40" viewBox="0 0 40 40"><path d="M2 18L10 10H36V26H10Z" fill="#ebe8e0" stroke="#d8d4cc" stroke-width="1.5"/><text x="10" y="23" font-size="13.5" font-weight="bold" font-family="Liberation Sans" fill="#c8c8c8">abc</text><path d="M14 33Q26 22 38 33Q26 42 14 33Z" fill="#f4f4f4" stroke="#ccc" stroke-width="1.5"/><circle cx="26" cy="33" r="3.5" fill="#aaa"/></svg><svg style="position:absolute;left:1636.8px;top:193.5px" width="40" height="40" viewBox="0 0 40 40"><path d="M2 18L10 10H36V26H10Z" fill="#ebe8e0" stroke="#d8d4cc" stroke-width="1.5"/><text x="10" y="23" font-size="13.5" font-weight="bold" font-family="Liberation Sans" fill="#c8c8c8">abc</text><rect x="22" y="22" width="17" height="17" rx="3" fill="#cfcfcf"/><path d="M25 28H31V25L36 30.5L31 36V33H25Z" fill="#fff"/></svg><svg style="position:absolute;left:1693.8px;top:193.5px" width="40" height="40" viewBox="0 0 40 40"><path d="M2 18L10 10H36V26H10Z" fill="#ebe8e0" stroke="#d8d4cc" stroke-width="1.5"/><text x="10" y="23" font-size="13.5" font-weight="bold" font-family="Liberation Sans" fill="#c8c8c8">abc</text><rect x="22" y="22" width="17" height="17" rx="3" fill="#cfcfcf"/><circle cx="30.5" cy="30.5" r="5" fill="none" stroke="#fff" stroke-width="2.2"/></svg><svg style="position:absolute;left:1749.5px;top:193.5px" width="40" height="40" viewBox="0 0 40 40"><path d="M2 18L10 10H36V26H10Z" fill="#ebe8e0" stroke="#d8d4cc" stroke-width="1.5"/><text x="10" y="23" font-size="13.5" font-weight="bold" font-family="Liberation Sans" fill="#c8c8c8">abc</text><rect x="22" y="22" width="17" height="17" rx="3" fill="#cfcfcf"/><path d="M25 36L35 25" stroke="#fff" stroke-width="2.5"/></svg><svg style="position:absolute;left:1834.3px;top:193.5px" width="40" height="40" viewBox="0 0 40 40"><ellipse cx="20" cy="9" rx="16" ry="6" fill="#eee" stroke="#888" stroke-width="1.3"/><path d="M4 9V30C4 34 36 34 36 30V9" fill="#bbb" stroke="#777" stroke-width="1.3"/><path d="M4 16C4 20 36 20 36 16M4 23C4 27 36 27 36 23" fill="none" stroke="#777"/><path d="M13 24H27L20 38Z" fill="#3f7fc8" stroke="#2a5a9a"/></svg><svg style="position:absolute;left:1891.2px;top:193.5px" width="40" height="40" viewBox="0 0 40 40"><ellipse cx="20" cy="20" rx="16" ry="6" fill="#f0f0f0" stroke="#dcdcdc" stroke-width="1.3"/><path d="M4 20V32C4 36 36 36 36 32V20" fill="#eaeaea" stroke="#dcdcdc" stroke-width="1.3"/><path d="M14 22V12H9L20 2L31 12H26V22Z" fill="#e0e0e0" stroke="#ccc"/></svg><svg style="position:absolute;left:1947.0px;top:193.5px" width="40" height="40" viewBox="0 0 40 40"><path d="M3 8V32C3 38 37 38 37 32V8" fill="#6a98cc" stroke="#2f4f7a" stroke-width="2"/><ellipse cx="20" cy="8" rx="17" ry="6" fill="#a8c8ee" stroke="#2f4f7a" stroke-width="2"/><path d="M3 16C3 22 37 22 37 16M3 24C3 30 37 30 37 24" fill="none" stroke="#2f4f7a" stroke-width="2"/></svg><svg style="position:absolute;left:692.3px;top:211.5px" width="10" height="6.0" viewBox="0 0 10 6.0"><path d="M0 0H10L5.0 5.5Z" fill="#cccccc"/></svg><svg style="position:absolute;left:825.9px;top:211.5px" width="10" height="6.0" viewBox="0 0 10 6.0"><path d="M0 0H10L5.0 5.5Z" fill="#cccccc"/></svg><svg style="position:absolute;left:500.0px;top:228.1px" width="8" height="4.8" viewBox="0 0 8 4.8"><path d="M0 0H8L4.0 4.4Z" fill="#cccccc"/></svg><svg style="position:absolute;left:23.1px;top:198.0px" width="11" height="31" viewBox="0 0 11 31"><circle cx="3" cy="3" r="1.1" fill="#b9b9b9"/><circle cx="8" cy="3" r="1.1" fill="#b9b9b9"/><circle cx="3" cy="8" r="1.1" fill="#b9b9b9"/><circle cx="8" cy="8" r="1.1" fill="#b9b9b9"/><circle cx="3" cy="13" r="1.1" fill="#b9b9b9"/><circle cx="8" cy="13" r="1.1" fill="#b9b9b9"/><circle cx="3" cy="18" r="1.1" fill="#b9b9b9"/><circle cx="8" cy="18" r="1.1" fill="#b9b9b9"/><circle cx="3" cy="23" r="1.1" fill="#b9b9b9"/><circle cx="8" cy="23" r="1.1" fill="#b9b9b9"/><circle cx="3" cy="28" r="1.1" fill="#b9b9b9"/><circle cx="8" cy="28" r="1.1" fill="#b9b9b9"/></svg><svg style="position:absolute;left:446.0px;top:198.0px" width="11" height="31" viewBox="0 0 11 31"><circle cx="3" cy="3" r="1.1" fill="#b9b9b9"/><circle cx="8" cy="3" r="1.1" fill="#b9b9b9"/><circle cx="3" cy="8" r="1.1" fill="#b9b9b9"/><circle cx="8" cy="8" r="1.1" fill="#b9b9b9"/><circle cx="3" cy="13" r="1.1" fill="#b9b9b9"/><circle cx="8" cy="13" r="1.1" fill="#b9b9b9"/><circle cx="3" cy="18" r="1.1" fill="#b9b9b9"/><circle cx="8" cy="18" r="1.1" fill="#b9b9b9"/><circle cx="3" cy="23" r="1.1" fill="#b9b9b9"/><circle cx="8" cy="23" r="1.1" fill="#b9b9b9"/><circle cx="3" cy="28" r="1.1" fill="#b9b9b9"/><circle cx="8" cy="28" r="1.1" fill="#b9b9b9"/></svg><svg style="position:absolute;left:1249.7px;top:198.0px" width="11" height="31" viewBox="0 0 11 31"><circle cx="3" cy="3" r="1.1" fill="#b9b9b9"/><circle cx="8" cy="3" r="1.1" fill="#b9b9b9"/><circle cx="3" cy="8" r="1.1" fill="#b9b9b9"/><circle cx="8" cy="8" r="1.1" fill="#b9b9b9"/><circle cx="3" cy="13" r="1.1" fill="#b9b9b9"/><circle cx="8" cy="13" r="1.1" fill="#b9b9b9"/><circle cx="3" cy="18" r="1.1" fill="#b9b9b9"/><circle cx="8" cy="18" r="1.1" fill="#b9b9b9"/><circle cx="3" cy="23" r="1.1" fill="#b9b9b9"/><circle cx="8" cy="23" r="1.1" fill="#b9b9b9"/><circle cx="3" cy="28" r="1.1" fill="#b9b9b9"/><circle cx="8" cy="28" r="1.1" fill="#b9b9b9"/></svg><svg style="position:absolute;left:1810.5px;top:198.0px" width="11" height="31" viewBox="0 0 11 31"><circle cx="3" cy="3" r="1.1" fill="#b9b9b9"/><circle cx="8" cy="3" r="1.1" fill="#b9b9b9"/><circle cx="3" cy="8" r="1.1" fill="#b9b9b9"/><circle cx="8" cy="8" r="1.1" fill="#b9b9b9"/><circle cx="3" cy="13" r="1.1" fill="#b9b9b9"/><circle cx="8" cy="13" r="1.1" fill="#b9b9b9"/><circle cx="3" cy="18" r="1.1" fill="#b9b9b9"/><circle cx="8" cy="18" r="1.1" fill="#b9b9b9"/><circle cx="3" cy="23" r="1.1" fill="#b9b9b9"/><circle cx="8" cy="23" r="1.1" fill="#b9b9b9"/><circle cx="3" cy="28" r="1.1" fill="#b9b9b9"/><circle cx="8" cy="28" r="1.1" fill="#b9b9b9"/></svg><svg style="position:absolute;left:2008.0px;top:198.0px" width="11" height="31" viewBox="0 0 11 31"><circle cx="3" cy="3" r="1.1" fill="#b9b9b9"/><circle cx="8" cy="3" r="1.1" fill="#b9b9b9"/><circle cx="3" cy="8" r="1.1" fill="#b9b9b9"/><circle cx="8" cy="8" r="1.1" fill="#b9b9b9"/><circle cx="3" cy="13" r="1.1" fill="#b9b9b9"/><circle cx="8" cy="13" r="1.1" fill="#b9b9b9"/><circle cx="3" cy="18" r="1.1" fill="#b9b9b9"/><circle cx="8" cy="18" r="1.1" fill="#b9b9b9"/><circle cx="3" cy="23" r="1.1" fill="#b9b9b9"/><circle cx="8" cy="23" r="1.1" fill="#b9b9b9"/><circle cx="3" cy="28" r="1.1" fill="#b9b9b9"/><circle cx="8" cy="28" r="1.1" fill="#b9b9b9"/></svg><div style="position:absolute;left:1384.8px;top:193px;width:1.5px;height:42px;background:#d0d0d0"></div><div style="position:absolute;left:1509.6px;top:193px;width:1.5px;height:42px;background:#d0d0d0"></div><div style="position:absolute;left:1651px;top:256.5px;width:53.5px;height:50.5px;background:#dcdcdc;border:1.5px solid #c4c4c4;border-radius:4px;box-sizing:border-box"></div><svg style="position:absolute;left:1658.0px;top:260.5px" width="40" height="40" viewBox="0 0 40 40"><rect x="8" y="6" width="5" height="5" fill="none" stroke="#bbb" stroke-width="1.5"/><rect x="26" y="11" width="5" height="5" fill="none" stroke="#bbb" stroke-width="1.5"/><rect x="16" y="26" width="5" height="5" fill="none" stroke="#bbb" stroke-width="1.5"/></svg><svg style="position:absolute;left:48.9px;top:260.5px" width="40" height="40" viewBox="0 0 40 40"><path d="M3 5H14L22 19L32 27" fill="none" stroke="#3c5a80" stroke-width="1.5"/><circle cx="3" cy="5" r="2" fill="#fff" stroke="#3c5a80"/><circle cx="14" cy="5" r="2" fill="#fff" stroke="#3c5a80"/><circle cx="32" cy="27" r="2" fill="#fff" stroke="#3c5a80"/><path d="M30 2L32 7H37L33 10L35 15L30 12L26 15L27 10L23 7H28Z" fill="#6a98cc" stroke="#3f6fa4"/><text x="1" y="34" font-size="24" font-weight="bold" font-family="Liberation Sans" fill="#6a98cc" stroke="#2f4f7a" stroke-width="1">A</text><rect x="24" y="24" width="15" height="15" rx="2.5" fill="#d0a200"/><path d="M31.5 26.7V36.3M27.323999999999998 29.1L35.676 33.9M27.323999999999998 33.9L35.676 29.1" stroke="#fff" stroke-width="2"/><circle cx="31.5" cy="31.5" r="1.6" fill="#d0a200"/></svg><svg style="position:absolute;left:122.4px;top:260.5px" width="40" height="40" viewBox="0 0 40 40"><rect x="2" y="2" width="33" height="33" fill="none" stroke="#333" stroke-width="1.2" stroke-dasharray="2 3"/><rect x="1" y="1" width="6" height="6" fill="#fff" stroke="#777"/><rect x="30" y="1" width="6" height="6" fill="#fff" stroke="#777"/><rect x="1" y="30" width="6" height="6" fill="#fff" stroke="#777"/><rect x="30" y="30" width="6" height="6" fill="#fff" stroke="#777"/><path d="M6 3L30 25L21 25L26 36L21 38L16 28L8 34Z" fill="#fff" stroke="#111" stroke-width="1.6" stroke-linejoin="round"/></svg><svg style="position:absolute;left:181.5px;top:260.5px" width="40" height="40" viewBox="0 0 40 40"><path d="M5 5L30 3L16 35L3 27Z" fill="none" stroke="#222" stroke-width="2"/><circle cx="5" cy="5" r="4" fill="#2f7ef0"/><circle cx="30" cy="3" r="4" fill="#2f7ef0"/><circle cx="16" cy="35" r="4" fill="#2f7ef0"/><circle cx="3" cy="27" r="4" fill="#2f7ef0"/><rect x="24" y="24" width="15" height="15" rx="2.5" fill="#5b9a5b"/><path d="M31.5 27.0V36.0M27.0 31.5H36.0" stroke="#fff" stroke-width="2.6"/></svg><svg style="position:absolute;left:239.1px;top:260.5px" width="40" height="40" viewBox="0 0 40 40"><path d="M31 7L10 5L4 17L14 34" fill="none" stroke="#222" stroke-width="2"/><circle cx="31" cy="7" r="4" fill="#2f7ef0"/><circle cx="10" cy="5" r="4" fill="#2f7ef0"/><circle cx="4" cy="17" r="4" fill="#2f7ef0"/><circle cx="14" cy="34" r="4" fill="#2f7ef0"/><rect x="24" y="24" width="15" height="15" rx="2.5" fill="#5b9a5b"/><path d="M31.5 27.0V36.0M27.0 31.5H36.0" stroke="#fff" stroke-width="2.6"/></svg><svg style="position:absolute;left:293.9px;top:260.5px" width="40" height="40" viewBox="0 0 40 40"><path d="M18 2L23 14H36L26 22L30 35L18 27L6 35L10 22L0 14H13Z" fill="#f8e6a8" stroke="#d8a85a" stroke-width="1.5"/><rect x="24" y="24" width="15" height="15" rx="2.5" fill="#5b9a5b"/><path d="M31.5 27.0V36.0M27.0 31.5H36.0" stroke="#fff" stroke-width="2.6"/></svg><svg style="position:absolute;left:353.0px;top:260.5px" width="40" height="40" viewBox="0 0 40 40"><text x="8" y="28" font-size="28" font-weight="bold" font-family="Liberation Serif" fill="#333">T</text><rect x="1" y="30" width="6" height="6" fill="#bbb" stroke="#999"/><rect x="24" y="24" width="15" height="15" rx="2.5" fill="#5b9a5b"/><path d="M31.5 27.0V36.0M27.0 31.5H36.0" stroke="#fff" stroke-width="2.6"/></svg><svg style="position:absolute;left:407.8px;top:260.5px" width="40" height="40" viewBox="0 0 40 40"><text x="1" y="24" font-size="13" font-weight="bold" font-family="Liberation Sans" fill="#333" transform="rotate(-10 10 20)">a</text><text x="14" y="14" font-size="13" font-weight="bold" font-family="Liberation Sans" fill="#333">b</text><text x="26" y="12" font-size="13" font-weight="bold" font-family="Liberation Sans" fill="#333">c</text><path d="M4 32L18 22L34 20" stroke="#999" stroke-dasharray="2 2"/><rect x="1" y="29" width="6" height="6" fill="#bbb"/><rect x="15" y="19" width="6" height="6" fill="#bbb"/><rect x="31" y="15" width="6" height="6" fill="#bbb"/><rect x="24" y="24" width="15" height="15" rx="2.5" fill="#5b9a5b"/><path d="M31.5 27.0V36.0M27.0 31.5H36.0" stroke="#fff" stroke-width="2.6"/></svg><svg style="position:absolute;left:465.4px;top:260.5px" width="40" height="40" viewBox="0 0 40 40"><rect x="3" y="3" width="30" height="32" fill="#e8eef5" stroke="#888" stroke-width="1.5"/><text x="7" y="29" font-size="28" font-weight="bold" font-family="Liberation Serif" fill="#333">T</text><rect x="24" y="24" width="15" height="15" rx="2.5" fill="#5b9a5b"/><path d="M31.5 27.0V36.0M27.0 31.5H36.0" stroke="#fff" stroke-width="2.6"/></svg><svg style="position:absolute;left:521.6px;top:260.5px" width="40" height="40" viewBox="0 0 40 40"><rect x="2" y="6" width="34" height="26" fill="#5ab0e8" stroke="#777" stroke-width="1.5"/><path d="M2 32V22L18 12L36 24V32Z" fill="#e8c870"/><rect x="2" y="27" width="34" height="5" fill="#c8a040"/><rect x="24" y="24" width="15" height="15" rx="2.5" fill="#5b9a5b"/><path d="M31.5 27.0V36.0M27.0 31.5H36.0" stroke="#fff" stroke-width="2.6"/></svg><svg style="position:absolute;left:588.0px;top:260.5px" width="40" height="40" viewBox="0 0 40 40"><path d="M2 2H38V26H14L6 36V26H2Z" fill="#eef3f8" stroke="#888" stroke-width="1.5"/><path d="M6 8H14M6 12H16M6 16H14M6 20H16" stroke="#6a98cc" stroke-width="2"/><text x="16" y="19" font-size="14" font-weight="bold" font-family="Liberation Mono" fill="#222">&lt;/&gt;</text></svg><svg style="position:absolute;left:1543.6px;top:260.5px" width="40" height="40" viewBox="0 0 40 40"><g transform="rotate(-45 20 20)"><path d="M6 4V20A14 14 0 0 0 34 20V4H25V20A5 5 0 0 1 15 20V4Z" fill="#dd2a2a" stroke="#8a1010" stroke-width="1.5"/><rect x="6.5" y="4.5" width="8" height="7" fill="#fff" stroke="#8a1010"/><rect x="25.5" y="4.5" width="8" height="7" fill="#fff" stroke="#8a1010"/></g></svg><svg style="position:absolute;left:1604.9px;top:260.5px" width="40" height="40" viewBox="0 0 40 40"><path d="M8 6L16 30L30 8M16 30V38" stroke="#d8d8d8" stroke-width="2" fill="none"/><rect x="4" y="2" width="6" height="6" fill="none" stroke="#d4d4d4" stroke-width="1.5"/><rect x="26" y="6" width="8" height="6" fill="none" stroke="#d4d4d4" stroke-width="1.5"/><rect x="26" y="16" width="8" height="6" fill="none" stroke="#d4d4d4" stroke-width="1.5"/></svg><svg style="position:absolute;left:2085.6px;top:260.5px" width="40" height="40" viewBox="0 0 40 40"><path d="M14 20L8 2M14 20L4 38M14 20L38 12" stroke="#5aa05a" stroke-width="3" fill="none"/><rect x="10" y="16" width="8" height="8" fill="#ccc" stroke="#777" stroke-width="1.5"/></svg><svg style="position:absolute;left:2143.0px;top:260.5px" width="40" height="40" viewBox="0 0 40 40"><path d="M18 6C26 2 38 4 38 14C38 22 32 24 26 22C22 22 20 26 18 30" fill="#aaa" stroke="#222" stroke-width="1.5"/><path d="M4 14C2 6 14 2 20 10C24 16 26 20 24 30C22 38 14 40 10 34C6 28 6 22 4 14Z" fill="#8cc58c" stroke="#222" stroke-width="1.5"/><path d="M7 20Q16 18 24 22" stroke="#222" stroke-dasharray="2 2"/></svg><svg style="position:absolute;left:2198.5px;top:260.5px" width="40" height="40" viewBox="0 0 40 40"><path d="M4 4L36 36M36 4L4 36" stroke="#d8d8d8" stroke-width="3"/><circle cx="20" cy="20" r="3" fill="none" stroke="#ccc" stroke-width="2"/></svg><svg style="position:absolute;left:2252.0px;top:260.5px" width="40" height="40" viewBox="0 0 40 40"><path d="M6 38L34 2M4 6L16 24L18 12L30 36" stroke="#d6d2c8" stroke-width="3" fill="none"/></svg><svg style="position:absolute;left:2330.7px;top:260.5px" width="40" height="40" viewBox="0 0 40 40"><path d="M4 36L14 26L10 8L30 18" stroke="#d8d8d8" stroke-width="2.5" fill="none"/><circle cx="14" cy="26" r="4" fill="none" stroke="#ccc" stroke-width="2"/><circle cx="10" cy="8" r="4" fill="none" stroke="#ccc" stroke-width="2"/><path d="M24 22L38 6" stroke="#e0e0e0" stroke-width="5"/></svg><svg style="position:absolute;left:99.9px;top:278.5px" width="10" height="6.0" viewBox="0 0 10 6.0"><path d="M0 0H10L5.0 5.5Z" fill="#4d4d4d"/></svg><svg style="position:absolute;left:640.4px;top:278.5px" width="10" height="6.0" viewBox="0 0 10 6.0"><path d="M0 0H10L5.0 5.5Z" fill="#4d4d4d"/></svg><svg style="position:absolute;left:2307.4px;top:278.5px" width="10" height="6.0" viewBox="0 0 10 6.0"><path d="M0 0H10L5.0 5.5Z" fill="#cccccc"/></svg><svg style="position:absolute;left:1625.0px;top:295.1px" width="8" height="4.8" viewBox="0 0 8 4.8"><path d="M0 0H8L4.0 4.4Z" fill="#cccccc"/></svg><svg style="position:absolute;left:1688.0px;top:295.1px" width="8" height="4.8" viewBox="0 0 8 4.8"><path d="M0 0H8L4.0 4.4Z" fill="#cccccc"/></svg><svg style="position:absolute;left:2171.0px;top:295.1px" width="8" height="4.8" viewBox="0 0 8 4.8"><path d="M0 0H8L4.0 4.4Z" fill="#333"/></svg><svg style="position:absolute;left:23.6px;top:265.0px" width="11" height="31" viewBox="0 0 11 31"><circle cx="3" cy="3" r="1.1" fill="#b9b9b9"/><circle cx="8" cy="3" r="1.1" fill="#b9b9b9"/><circle cx="3" cy="8" r="1.1" fill="#b9b9b9"/><circle cx="8" cy="8" r="1.1" fill="#b9b9b9"/><circle cx="3" cy="13" r="1.1" fill="#b9b9b9"/><circle cx="8" cy="13" r="1.1" fill="#b9b9b9"/><circle cx="3" cy="18" r="1.1" fill="#b9b9b9"/><circle cx="8" cy="18" r="1.1" fill="#b9b9b9"/><circle cx="3" cy="23" r="1.1" fill="#b9b9b9"/><circle cx="8" cy="23" r="1.1" fill="#b9b9b9"/><circle cx="3" cy="28" r="1.1" fill="#b9b9b9"/><circle cx="8" cy="28" r="1.1" fill="#b9b9b9"/></svg><svg style="position:absolute;left:1520.5px;top:265.0px" width="11" height="31" viewBox="0 0 11 31"><circle cx="3" cy="3" r="1.1" fill="#b9b9b9"/><circle cx="8" cy="3" r="1.1" fill="#b9b9b9"/><circle cx="3" cy="8" r="1.1" fill="#b9b9b9"/><circle cx="8" cy="8" r="1.1" fill="#b9b9b9"/><circle cx="3" cy="13" r="1.1" fill="#b9b9b9"/><circle cx="8" cy="13" r="1.1" fill="#b9b9b9"/><circle cx="3" cy="18" r="1.1" fill="#b9b9b9"/><circle cx="8" cy="18" r="1.1" fill="#b9b9b9"/><circle cx="3" cy="23" r="1.1" fill="#b9b9b9"/><circle cx="8" cy="23" r="1.1" fill="#b9b9b9"/><circle cx="3" cy="28" r="1.1" fill="#b9b9b9"/><circle cx="8" cy="28" r="1.1" fill="#b9b9b9"/></svg><div style="position:absolute;left:574.5px;top:258px;width:1.5px;height:44px;background:#d0d0d0"></div><div style="position:absolute;left:1707px;top:261px;width:177px;height:40px;background:#efefef;border:1.5px solid #bdbdbd;border-radius:4px;box-sizing:border-box"></div><div style="position:absolute;left:1859px;top:263px;width:1.5px;height:36px;background:#c8c8c8"></div><svg style="position:absolute;left:1865.5px;top:267.0px" width="12" height="10" viewBox="0 0 12 10"><path d="M0 8L6 1L12 8Z" fill="#c4c4c4"/></svg><svg style="position:absolute;left:1865.5px;top:285.0px" width="12" height="10" viewBox="0 0 12 10"><path d="M0 2L6 9L12 2Z" fill="#c4c4c4"/></svg><div style="position:absolute;left:1717px;top:255.5px;height:51.0px;font-size:25.5px;line-height:51.0px;color:#aaaaaa;font-weight:normal;white-space:nowrap;">12</div><div style="position:absolute;left:1887px;top:261px;width:189px;height:40px;background:#f6f6f6;border:1.5px solid #c8c8c8;border-radius:4px;box-sizing:border-box"></div><div style="position:absolute;left:1896px;top:255.5px;height:51.0px;font-size:25.5px;line-height:51.0px;color:#aaaaaa;font-weight:normal;white-space:nowrap;">px</div><svg style="position:absolute;left:2052.5px;top:278.7px" width="11" height="6.6" viewBox="0 0 11 6.6"><path d="M0 0H11L5.5 6.050000000000001Z" fill="#c4c4c4"/></svg><div style="position:absolute;left:17px;top:313px;width:87px;height:1375px;background:#f2f2f2"></div><div style="position:absolute;left:17px;top:313px;width:37px;height:1375px;background:#f6f5f3"></div><div style="position:absolute;left:103px;top:313px;width:1.5px;height:1375px;background:#cfcfcf"></div><svg style="position:absolute;left:32.0px;top:322.0px" width="40" height="11" viewBox="0 0 40 11"><circle cx="3" cy="3" r="1" fill="#c4c4c4"/><circle cx="8" cy="3" r="1" fill="#c4c4c4"/><circle cx="13" cy="3" r="1" fill="#c4c4c4"/><circle cx="18" cy="3" r="1" fill="#c4c4c4"/><circle cx="23" cy="3" r="1" fill="#c4c4c4"/><circle cx="28" cy="3" r="1" fill="#c4c4c4"/><circle cx="33" cy="3" r="1" fill="#c4c4c4"/><circle cx="3" cy="8" r="1" fill="#c4c4c4"/><circle cx="8" cy="8" r="1" fill="#c4c4c4"/><circle cx="13" cy="8" r="1" fill="#c4c4c4"/><circle cx="18" cy="8" r="1" fill="#c4c4c4"/><circle cx="23" cy="8" r="1" fill="#c4c4c4"/><circle cx="28" cy="8" r="1" fill="#c4c4c4"/><circle cx="33" cy="8" r="1" fill="#c4c4c4"/></svg><svg style="position:absolute;left:31.5px;top:340.6px" width="40" height="40" viewBox="0 0 40 40"><path d="M5 6L17 32L30 8L38 8" fill="none" stroke="#2f4560" stroke-width="2.2"/><circle cx="5" cy="6" r="3.5" fill="#fff" stroke="#2f4560" stroke-width="1.8"/><circle cx="17" cy="32" r="3.5" fill="#fff" stroke="#2f4560" stroke-width="1.8"/><circle cx="28" cy="8" r="3.5" fill="#fff" stroke="#2f4560" stroke-width="1.8"/><circle cx="37" cy="8" r="3.5" fill="#fff" stroke="#2f4560" stroke-width="1.8"/><rect x="24" y="24" width="15" height="15" rx="2.5" fill="#5b9a5b"/><path d="M31.5 27.0V36.0M27.0 31.5H36.0" stroke="#fff" stroke-width="2.6"/></svg><svg style="position:absolute;left:31.5px;top:395.6px" width="40" height="40" viewBox="0 0 40 40"><path d="M2 2H12V12H2ZM22 2H32V12H22ZM12 12H22V22H12ZM2 22H12V32H2ZM22 22H32V32H22Z" fill="#1f3a5f"/><path d="M12 2H22V12H12ZM2 12H12V22H2ZM22 12H32V22H22ZM12 22H22V32H12Z" fill="#6a98cc"/><rect x="24" y="24" width="15" height="15" rx="2.5" fill="#5b9a5b"/><path d="M31.5 27.0V36.0M27.0 31.5H36.0" stroke="#fff" stroke-width="2.6"/></svg><svg style="position:absolute;left:31.5px;top:452.2px" width="40" height="40" viewBox="0 0 40 40"><rect x="3" y="3" width="34" height="34" fill="#6a98cc" stroke="#2f4f7a" stroke-width="2"/><path d="M3 3L20 20M20 3L3 20M20 20L37 3M3 20H37M20 3V37M3 29H20M11 20V37" stroke="#2f4f7a" stroke-width="1.8"/><rect x="5" y="5" width="13" height="13" fill="#a8c8ee" opacity=".6"/><rect x="24" y="24" width="15" height="15" rx="2.5" fill="#5b9a5b"/><path d="M31.5 27.0V36.0M27.0 31.5H36.0" stroke="#fff" stroke-width="2.6"/></svg><svg style="position:absolute;left:31.5px;top:508.0px" width="40" height="40" viewBox="0 0 40 40"><path d="M14 4C22 2 26 10 22 20C18 30 10 32 6 32C12 28 16 22 12 18C6 18 6 6 14 4Z" fill="#6a98cc" stroke="#2f4f7a" stroke-width="1.2"/><rect x="24" y="24" width="15" height="15" rx="2.5" fill="#5b9a5b"/><path d="M31.5 27.0V36.0M27.0 31.5H36.0" stroke="#fff" stroke-width="2.6"/></svg><svg style="position:absolute;left:31.5px;top:563.9px" width="40" height="40" viewBox="0 0 40 40"><path d="M4 38C8 26 18 10 36 3C34 14 24 28 8 32Z" fill="#7aa3d6" stroke="#2f4f7a" stroke-width="1.5"/><path d="M6 36L30 9" stroke="#2f4f7a" stroke-width="1"/><rect x="24" y="24" width="15" height="15" rx="2.5" fill="#5b9a5b"/><path d="M31.5 27.0V36.0M27.0 31.5H36.0" stroke="#fff" stroke-width="2.6"/></svg><svg style="position:absolute;left:31.5px;top:617.7px" width="40" height="40" viewBox="0 0 40 40"><rect x="3" y="3" width="34" height="34" rx="3" fill="#b8cde6" stroke="#4a6a90" stroke-width="1.5"/><path d="M7 6L17 32L30 6" fill="none" stroke="#2f4560" stroke-width="2"/><circle cx="7" cy="6" r="3" fill="#fff" stroke="#2f4560" stroke-width="1.5"/><circle cx="17" cy="32" r="3" fill="#fff" stroke="#2f4560" stroke-width="1.5"/><circle cx="30" cy="6" r="3" fill="#fff" stroke="#2f4560" stroke-width="1.5"/><rect x="24" y="24" width="15" height="15" rx="2.5" fill="#5b9a5b"/><path d="M31.5 27.0V36.0M27.0 31.5H36.0" stroke="#fff" stroke-width="2.6"/></svg><svg style="position:absolute;left:31.5px;top:671.4px" width="40" height="40" viewBox="0 0 40 40"><path d="M9 5C15 0 29 0 34 7C38 14 35 22 31 25V34C29 38 24 38 23 34V28C19 30 14 29 12 25C5 24 2 11 9 5Z" fill="#4a78b8" stroke="#1f3a5f" stroke-width="1.6"/><path d="M12 8C10 14 12 20 16 22M23 16V30M18 10C22 12 26 12 30 9" stroke="#fff" stroke-width="1.5" fill="none"/><rect x="24" y="24" width="15" height="15" rx="2.5" fill="#5b9a5b"/><path d="M31.5 27.0V36.0M27.0 31.5H36.0" stroke="#fff" stroke-width="2.6"/></svg><svg style="position:absolute;left:31.5px;top:727.2px" width="40" height="40" viewBox="0 0 40 40"><circle cx="19" cy="19" r="17" fill="#8ab4e0" stroke="#2f4f7a" stroke-width="1.5"/><path d="M7 11Q12 6 17 9L18 14Q13 18 9 16Z M21 6Q27 5 31 10L29 16Q24 15 22 12Z M13 21Q19 19 23 23L21 32Q15 30 13 26Z M27 20L33 22L31 28L27 25Z" fill="#2f4f7a"/><rect x="24" y="24" width="15" height="15" rx="2.5" fill="#5b9a5b"/><path d="M31.5 27.0V36.0M27.0 31.5H36.0" stroke="#fff" stroke-width="2.6"/></svg><svg style="position:absolute;left:31.5px;top:781.0px" width="40" height="40" viewBox="0 0 40 40"><circle cx="19" cy="19" r="17" fill="#fff" stroke="#1f3a5f" stroke-width="2.5"/><path d="M2 19H36M19 2V36" stroke="#1f3a5f" stroke-width="2"/><ellipse cx="19" cy="19" rx="8" ry="17" fill="none" stroke="#1f3a5f" stroke-width="2"/><path d="M4 12H34M4 26H34" stroke="#1f3a5f" stroke-width="5"/><path d="M4 12H34M4 26H34" stroke="#6a98cc" stroke-width="3"/><rect x="24" y="24" width="15" height="15" rx="2.5" fill="#5b9a5b"/><path d="M31.5 27.0V36.0M27.0 31.5H36.0" stroke="#fff" stroke-width="2.6"/></svg><svg style="position:absolute;left:31.5px;top:836.8px" width="40" height="40" viewBox="0 0 40 40"><circle cx="19" cy="19" r="17" fill="#e8f0fa" stroke="#6a98cc" stroke-width="1.5"/><path d="M2 19H36M19 2V36" stroke="#6a98cc" stroke-width="1.3"/><ellipse cx="19" cy="19" rx="8" ry="17" fill="none" stroke="#6a98cc" stroke-width="1.3"/><path d="M9 8L17 30L28 8" stroke="#2f4f7a" stroke-width="2" fill="none"/><circle cx="9" cy="8" r="2.5" fill="#fff" stroke="#2f4f7a"/><circle cx="17" cy="30" r="2.5" fill="#fff" stroke="#2f4f7a"/><circle cx="28" cy="8" r="2.5" fill="#fff" stroke="#2f4f7a"/><rect x="24" y="24" width="15" height="15" rx="2.5" fill="#5b9a5b"/><path d="M31.5 27.0V36.0M27.0 31.5H36.0" stroke="#fff" stroke-width="2.6"/></svg><svg style="position:absolute;left:31.5px;top:892.7px" width="40" height="40" viewBox="0 0 40 40"><rect x="4" y="11" width="32" height="18" rx="3" fill="#6a98cc" stroke="#3f6fa4" stroke-width="1.5"/><path d="M10 4V11M16 4V11M22 4V11M28 4V11M10 29V36M16 29V36M22 29V36M28 29V36" stroke="#3f5f8a" stroke-width="1.8"/><rect x="24" y="24" width="15" height="15" rx="2.5" fill="#d0a200"/><path d="M31.5 26.7V36.3M27.323999999999998 29.1L35.676 33.9M27.323999999999998 33.9L35.676 29.1" stroke="#fff" stroke-width="2"/><circle cx="31.5" cy="31.5" r="1.6" fill="#d0a200"/></svg><svg style="position:absolute;left:83.9px;top:688.7px" width="11" height="6.6" viewBox="0 0 11 6.6"><path d="M0 0H11L5.5 6.050000000000001Z" fill="#555"/></svg><svg style="position:absolute;left:83.9px;top:909.7px" width="11" height="6.6" viewBox="0 0 11 6.6"><path d="M0 0H11L5.5 6.050000000000001Z" fill="#555"/></svg><div style="position:absolute;left:105px;top:313px;width:513px;height:1375px;background:#efefef"></div><div style="position:absolute;left:113px;top:306.5px;height:51.0px;font-size:25.5px;line-height:51.0px;color:#000;font-weight:normal;white-space:nowrap;">Layers</div><svg style="position:absolute;left:562.0px;top:322.0px" width="19" height="19" viewBox="0 0 19 19"><rect x="1" y="1" width="17" height="17" rx="4" fill="none" stroke="#777" stroke-width="1.6"/><rect x="5" y="7" width="7" height="7" rx="1.5" fill="none" stroke="#777" stroke-width="1.6"/><path d="M8 7V4.5H14V10.5H12" fill="none" stroke="#777" stroke-width="1.6"/></svg><svg style="position:absolute;left:586.0px;top:322.0px" width="19" height="19" viewBox="0 0 19 19"><rect x="1" y="1" width="17" height="17" rx="4" fill="none" stroke="#777" stroke-width="1.6"/><path d="M5 5L14 14M14 5L5 14" stroke="#666" stroke-width="3"/></svg><svg style="position:absolute;left:119.9px;top:360.7px" width="26" height="26" viewBox="0 0 26 26"><path d="M3 14L10 8L16 16L10 22Z" fill="#e44" /><path d="M3 9L10 3L16 10L10 16Z" fill="#f3d53c"/><path d="M3 12L10 6L14 12L8 18Z" fill="#6a98cc" opacity=".8"/><path d="M8 14L14 20L18 16L12 10Z" fill="#d8b070" stroke="#a07840" stroke-width=".8"/><path d="M16 12L23 4" stroke="#c8903a" stroke-width="2.5"/></svg><svg style="position:absolute;left:163.6px;top:360.7px" width="26" height="26" viewBox="0 0 26 26"><path d="M4 10H16V22H4Z" fill="none" stroke="#888" stroke-width="1.3"/><path d="M7 6H19V18H7Z" fill="#fafafa" stroke="#888" stroke-width="1.3"/><path d="M12 2V14" stroke="#4a78b8" stroke-width="2.5"/><rect x="13" y="14" width="10" height="10" rx="2.5" fill="#5b9a5b"/><path d="M18.0 16.0V22.0M15.0 19.0H21.0" stroke="#fff" stroke-width="2.6"/></svg><svg style="position:absolute;left:206.6px;top:360.7px" width="26" height="26" viewBox="0 0 26 26"><path d="M1 12Q12 2 23 12Q12 22 1 12Z" fill="#fff" stroke="#888" stroke-width="1.2"/><circle cx="12" cy="11" r="5" fill="#6a98cc" stroke="#2f4f7a"/><circle cx="12.5" cy="10" r="1.8" fill="#000"/></svg><svg style="position:absolute;left:249.6px;top:360.7px" width="26" height="26" viewBox="0 0 26 26"><path d="M2 2H22V6L14 14V24L10 20V14L2 6Z" fill="#6a98cc" stroke="#3f6fa4" stroke-width="1.2"/><rect x="2" y="2" width="20" height="3.5" fill="#f3d53c"/></svg><svg style="position:absolute;left:292.6px;top:360.7px" width="26" height="26" viewBox="0 0 26 26"><path d="M11 4C10 1 3 1 3 5C3 8 5 9 7 9C4 9 1 11 2 14C3 18 9 18 11 15" fill="none" stroke="#6a2e82" stroke-width="2" stroke-linecap="round"/><path d="M12 22V14H22V22" fill="none" stroke="#999" stroke-width="3"/></svg><svg style="position:absolute;left:356.3px;top:360.7px" width="26" height="26" viewBox="0 0 26 26"><path d="M2 3H24M5 3V21H7M5 12H7" stroke="#aaa" stroke-width="1.5" fill="none"/><rect x="7" y="8" width="5" height="5" fill="#f39a28"/><rect x="7" y="17" width="5" height="5" fill="#f39a28"/><path d="M14 2H20V14H24L17 22L10 14H14Z" fill="#6a98cc" stroke="#2f4f7a"/></svg><svg style="position:absolute;left:398.5px;top:360.7px" width="26" height="26" viewBox="0 0 26 26"><path d="M2 3H24M5 3V21H7M5 12H7" stroke="#aaa" stroke-width="1.5" fill="none"/><rect x="7" y="8" width="5" height="5" fill="#f39a28"/><rect x="7" y="17" width="5" height="5" fill="#f39a28"/><path d="M14 22H20V10H24L17 2L10 10H14Z" fill="#6a98cc" stroke="#2f4f7a"/></svg><svg style="position:absolute;left:440.7px;top:360.7px" width="26" height="26" viewBox="0 0 26 26"><rect x="2" y="2" width="18" height="18" fill="none" stroke="#888" stroke-width="1.5"/><rect x="14" y="15" width="10" height="8" rx="2" fill="#e04848"/><path d="M16 19H22" stroke="#fff" stroke-width="2"/></svg><svg style="position:absolute;left:227.5px;top:377.3px" width="9" height="5.3999999999999995" viewBox="0 0 9 5.3999999999999995"><path d="M0 0H9L4.5 4.95Z" fill="#555"/></svg><svg style="position:absolute;left:270.5px;top:377.3px" width="9" height="5.3999999999999995" viewBox="0 0 9 5.3999999999999995"><path d="M0 0H9L4.5 4.95Z" fill="#555"/></svg><svg style="position:absolute;left:330.5px;top:370.7px" width="11" height="6.6" viewBox="0 0 11 6.6"><path d="M0 0H11L5.5 6.050000000000001Z" fill="#555"/></svg><div style="position:absolute;left:107px;top:401px;width:500.5px;height:1286px;background:#fff;border:1px solid #c6c6c6;box-sizing:border-box"></div><div style="position:absolute;left:108px;top:1662px;width:498px;height:24px;background:#f4f4f3;border-top:1px solid #d6d6d6;box-sizing:border-box"></div><div style="position:absolute;left:130px;top:1663px;width:1px;height:23px;background:#d6d6d6"></div><div style="position:absolute;left:560px;top:1663px;width:22px;height:23px;background:#e6e6e6;border-left:1px solid #d0d0d0;border-right:1px solid #d0d0d0;box-sizing:border-box"></div><svg style="position:absolute;left:114.5px;top:1669.0px" width="9" height="12" viewBox="0 0 9 12"><path d="M8 0V12L1 6Z" fill="#555"/></svg><svg style="position:absolute;left:589.5px;top:1669.0px" width="9" height="12" viewBox="0 0 9 12"><path d="M1 0V12L8 6Z" fill="#555"/></svg><svg style="position:absolute;left:148.0px;top:407.5px" width="23" height="23" viewBox="0 0 23 23"><rect x="1" y="1" width="21" height="21" fill="#fff" stroke="#b8b8b8" stroke-width="1.5"/><path d="M5.5 11.5L9.5 17L17 4.5" fill="none" stroke="#111" stroke-width="2.6"/></svg><svg style="position:absolute;left:181.5px;top:405.0px" width="26" height="28" viewBox="0 0 26 28"><rect x="1" y="1" width="24" height="26" fill="#fff" stroke="#f0a040" stroke-width="1.6"/></svg><div style="position:absolute;left:220px;top:393.6px;height:50.8px;font-size:25.4px;line-height:50.8px;color:#000;font-weight:bold;white-space:nowrap;">london_planning_districts</div><div style="position:absolute;left:108px;top:435.5px;width:499px;height:31px;background:#3584c8"></div><svg style="position:absolute;left:118.5px;top:448.5px" width="13" height="7" viewBox="0 0 13 7"><path d="M0 0H13L6.5 7Z" fill="#15335a"/></svg><svg style="position:absolute;left:148.0px;top:440.0px" width="23" height="23" viewBox="0 0 23 23"><rect x="1" y="1" width="21" height="21" fill="#fff" stroke="#b8b8b8" stroke-width="1.5"/><path d="M5.5 11.5L9.5 17L17 4.5" fill="none" stroke="#111" stroke-width="2.6"/></svg><svg style="position:absolute;left:180.0px;top:439.0px" width="31" height="24" viewBox="0 0 31 24"><path d="M2 6C6 2 10 8 15 6C20 4 24 2 28 6C30 10 28 14 30 18C26 22 20 18 15 20C10 22 6 22 2 18C4 14 0 10 2 6Z" fill="#ddd" stroke="#999" stroke-width="1.2"/></svg><div style="position:absolute;left:220px;top:426.1px;height:50.8px;font-size:25.4px;line-height:50.8px;color:#fff;font-weight:bold;white-space:nowrap;">london_planning_districts_ndvi</div><div style="position:absolute;left:219px;top:463.8px;width:388px;height:2.2px;background:#fff"></div><svg style="position:absolute;left:182.0px;top:474.5px" width="23" height="23" viewBox="0 0 23 23"><rect x="1" y="1" width="21" height="21" fill="#fff" stroke="#b8b8b8" stroke-width="1.5"/><path d="M5.5 11.5L9.5 17L17 4.5" fill="none" stroke="#111" stroke-width="2.6"/></svg><svg style="position:absolute;left:216.5px;top:470.5px" width="31" height="31" viewBox="0 0 31 31"><rect x="0.75" y="0.75" width="29.5" height="29.5" fill="#f7fcf5" stroke="#777" stroke-width="1.2"/></svg><div style="position:absolute;left:257px;top:460.7px;height:50.6px;font-size:25.3px;line-height:50.6px;color:#000;font-weight:normal;white-space:nowrap;">0.283 - 0.357</div><svg style="position:absolute;left:182.0px;top:509.0px" width="23" height="23" viewBox="0 0 23 23"><rect x="1" y="1" width="21" height="21" fill="#fff" stroke="#b8b8b8" stroke-width="1.5"/><path d="M5.5 11.5L9.5 17L17 4.5" fill="none" stroke="#111" stroke-width="2.6"/></svg><svg style="position:absolute;left:216.5px;top:505.0px" width="31" height="31" viewBox="0 0 31 31"><rect x="0.75" y="0.75" width="29.5" height="29.5" fill="#c7e9c0" stroke="#777" stroke-width="1.2"/></svg><div style="position:absolute;left:257px;top:495.2px;height:50.6px;font-size:25.3px;line-height:50.6px;color:#000;font-weight:normal;white-space:nowrap;">0.357 - 0.376</div><svg style="position:absolute;left:182.0px;top:543.0px" width="23" height="23" viewBox="0 0 23 23"><rect x="1" y="1" width="21" height="21" fill="#fff" stroke="#b8b8b8" stroke-width="1.5"/><path d="M5.5 11.5L9.5 17L17 4.5" fill="none" stroke="#111" stroke-width="2.6"/></svg><svg style="position:absolute;left:216.5px;top:539.0px" width="31" height="31" viewBox="0 0 31 31"><rect x="0.75" y="0.75" width="29.5" height="29.5" fill="#76c578" stroke="#777" stroke-width="1.2"/></svg><div style="position:absolute;left:257px;top:529.2px;height:50.6px;font-size:25.3px;line-height:50.6px;color:#000;font-weight:normal;white-space:nowrap;">0.376 - 0.392</div><svg style="position:absolute;left:182.0px;top:577.5px" width="23" height="23" viewBox="0 0 23 23"><rect x="1" y="1" width="21" height="21" fill="#fff" stroke="#b8b8b8" stroke-width="1.5"/><path d="M5.5 11.5L9.5 17L17 4.5" fill="none" stroke="#111" stroke-width="2.6"/></svg><svg style="position:absolute;left:216.5px;top:573.5px" width="31" height="31" viewBox="0 0 31 31"><rect x="0.75" y="0.75" width="29.5" height="29.5" fill="#2c914b" stroke="#777" stroke-width="1.2"/></svg><div style="position:absolute;left:257px;top:563.7px;height:50.6px;font-size:25.3px;line-height:50.6px;color:#000;font-weight:normal;white-space:nowrap;">0.392 - 0.406</div><svg style="position:absolute;left:182.0px;top:612.0px" width="23" height="23" viewBox="0 0 23 23"><rect x="1" y="1" width="21" height="21" fill="#fff" stroke="#b8b8b8" stroke-width="1.5"/><path d="M5.5 11.5L9.5 17L17 4.5" fill="none" stroke="#111" stroke-width="2.6"/></svg><svg style="position:absolute;left:216.5px;top:608.0px" width="31" height="31" viewBox="0 0 31 31"><rect x="0.75" y="0.75" width="29.5" height="29.5" fill="#00441b" stroke="#777" stroke-width="1.2"/></svg><div style="position:absolute;left:257px;top:598.2px;height:50.6px;font-size:25.3px;line-height:50.6px;color:#000;font-weight:normal;white-space:nowrap;">0.406 - 0.471</div><svg style="position:absolute;left:119.5px;top:653.5px" width="13" height="7" viewBox="0 0 13 7"><path d="M0 0H13L6.5 7Z" fill="#555"/></svg><svg style="position:absolute;left:148.0px;top:645.0px" width="23" height="23" viewBox="0 0 23 23"><rect x="1" y="1" width="21" height="21" fill="#fff" stroke="#b8b8b8" stroke-width="1.5"/><path d="M5.5 11.5L9.5 17L17 4.5" fill="none" stroke="#111" stroke-width="2.6"/></svg><svg style="position:absolute;left:183.5px;top:645.0px" width="23" height="23" viewBox="0 0 23 23"><path d="M1 1H8V8H1ZM15 1H22V8H15ZM8 8H15V15H8ZM1 15H8V22H1ZM15 15H22V22H15Z" fill="#1f3a5f"/><path d="M8 1H15V8H8ZM1 8H8V15H1ZM15 8H22V15H15ZM8 15H15V22H8Z" fill="#8ab0d8"/></svg><div style="position:absolute;left:220px;top:631.1px;height:50.8px;font-size:25.4px;line-height:50.8px;color:#000;font-weight:bold;white-space:nowrap;;width:386px;overflow:hidden">london_sentinel2_20190709_ndvi</div><div style="position:absolute;left:183px;top:662.2px;height:50.6px;font-size:25.3px;line-height:50.6px;color:#000;font-weight:normal;white-space:nowrap;">Band 1 (Gray)</div><div style="position:absolute;left:182px;top:705px;width:27px;height:162px;background:linear-gradient(#fafafa,#000)"></div><div style="position:absolute;left:223px;top:693.7px;height:50.6px;font-size:25.3px;line-height:50.6px;color:#000;font-weight:normal;white-space:nowrap;">0.641761</div><div style="position:absolute;left:222px;top:828.7px;height:50.6px;font-size:25.3px;line-height:50.6px;color:#000;font-weight:normal;white-space:nowrap;">-0.074454</div><svg style="position:absolute;left:119.5px;top:882.5px" width="13" height="7" viewBox="0 0 13 7"><path d="M0 0H13L6.5 7Z" fill="#555"/></svg><svg style="position:absolute;left:148.0px;top:874.0px" width="23" height="23" viewBox="0 0 23 23"><rect x="1" y="1" width="21" height="21" fill="#fff" stroke="#b8b8b8" stroke-width="1.5"/><path d="M5.5 11.5L9.5 17L17 4.5" fill="none" stroke="#111" stroke-width="2.6"/></svg><svg style="position:absolute;left:183.5px;top:874.0px" width="23" height="23" viewBox="0 0 23 23"><path d="M1 1H8V8H1ZM15 1H22V8H15ZM8 8H15V15H8ZM1 15H8V22H1ZM15 15H22V22H15Z" fill="#1f3a5f"/><path d="M8 1H15V8H8ZM1 8H8V15H1ZM15 8H22V15H15ZM8 15H15V22H8Z" fill="#8ab0d8"/></svg><div style="position:absolute;left:220px;top:860.1px;height:50.8px;font-size:25.4px;line-height:50.8px;color:#000;font-weight:bold;white-space:nowrap;">london_sentinel2_20190709</div><div style="position:absolute;left:182px;top:904.5px;width:27px;height:27px;background:#ff0000"></div><div style="position:absolute;left:220px;top:892.7px;height:50.6px;font-size:25.3px;line-height:50.6px;color:#000;font-weight:normal;white-space:nowrap;">Band 4</div><div style="position:absolute;left:182px;top:937.0px;width:27px;height:27px;background:#00ff00"></div><div style="position:absolute;left:220px;top:925.2px;height:50.6px;font-size:25.3px;line-height:50.6px;color:#000;font-weight:normal;white-space:nowrap;">Band 2</div><div style="position:absolute;left:182px;top:969.5px;width:27px;height:27px;background:#0000ff"></div><div style="position:absolute;left:220px;top:957.7px;height:50.6px;font-size:25.3px;line-height:50.6px;color:#000;font-weight:normal;white-space:nowrap;">Band 1 (Gray)</div><svg style="position:absolute;left:612.1px;top:989.0px" width="4" height="30" viewBox="0 0 4 30"><rect x="1" y="1.0" width="2" height="2" fill="#a8a8a8"/><rect x="1" y="6.2" width="2" height="2" fill="#a8a8a8"/><rect x="1" y="11.4" width="2" height="2" fill="#a8a8a8"/><rect x="1" y="16.6" width="2" height="2" fill="#a8a8a8"/><rect x="1" y="21.8" width="2" height="2" fill="#a8a8a8"/><rect x="1" y="27.0" width="2" height="2" fill="#a8a8a8"/></svg><svg style="position:absolute;left:1738.0px;top:989.0px" width="4" height="30" viewBox="0 0 4 30"><rect x="1" y="1.0" width="2" height="2" fill="#a8a8a8"/><rect x="1" y="6.2" width="2" height="2" fill="#a8a8a8"/><rect x="1" y="11.4" width="2" height="2" fill="#a8a8a8"/><rect x="1" y="16.6" width="2" height="2" fill="#a8a8a8"/><rect x="1" y="21.8" width="2" height="2" fill="#a8a8a8"/><rect x="1" y="27.0" width="2" height="2" fill="#a8a8a8"/></svg><div style="position:absolute;left:618px;top:315px;width:1115px;height:1372px;background:#fff;border:1.5px solid #bcbcbc;box-sizing:border-box"></div><svg style="position:absolute;left:620px;top:316px;" width="1112" height="1370" viewBox="0 0 1112 1370"><path d="M107.2,311.8 L293.6,240.5 L396.3,200.0 L500.1,158.2 L606.3,116.4 L763.4,54.4 L795.1,100.6 L816.7,122.2 L828.3,130.8 L845.5,139.5 L857.1,151.0 L867.2,175.5 L924.8,153.9 L933.5,178.4 L994.0,155.3 L1012.8,208.7 L985.4,221.6 L1014.2,305.2 L1002.7,313.9 L1005.5,328.3 L1002.7,331.2 L1011.3,332.6 L1035.8,396.0 L1053.1,406.1 L1058.9,416.2 L1020.4,432.0 L1032.4,462.1 L1003.4,475.1 L1004.4,488.2 L1000.4,492.2 L1002.4,498.2 L998.3,500.2 L1000.4,506.2 L996.3,516.2 L996.3,526.3 L1000.4,536.3 L1014.4,528.3 L1020.4,530.3 L1022.4,540.3 L1029.4,544.3 L1052.5,663.6 L1055.5,665.6 L1061.5,708.7 L1073.3,756.6 L1080.5,756.6 L1086.3,776.8 L1051.7,789.7 L1056.0,818.6 L1012.8,824.3 L1015.7,856.0 L1014.2,857.5 L1027.2,924.1 L1038.7,980.2 L1037.3,981.7 L1056.0,1084.0 L701.4,1203.6 L540.0,1256.9 L478.3,1275.5 L360.2,1317.3 L357.3,1308.7 L394.8,1269.8 L409.2,1252.5 L440.9,1200.6 L416.4,1207.8 L371.7,1063.8 L348.7,1069.5 L344.3,1050.8 L366.0,1043.6 L360.2,1026.3 L317.0,1040.7 L314.1,1036.4 L269.4,1050.8 L249.3,1055.1 L242.0,1034.9 L230.5,1037.8 L221.9,1010.4 L193.1,924.0 L184.4,889.0 L197.4,884.7 L187.3,854.4 L162.8,854.4 L158.5,847.2 L145.5,847.2 L144.1,838.6 L151.3,835.7 L141.2,804.0 L93.6,817.0 L84.1,784.1 L58.9,713.0 L62.7,712.0 L49.1,668.3 L32.6,655.7 L34.6,648.9 L35.5,635.3 L31.7,623.6 L26.8,611.9 L29.7,602.2 L39.4,596.4 L51.1,586.7 L60.8,577.9 L76.3,569.2 L88.0,555.6 L100.6,537.1 L111.3,526.5 L126.9,512.9 L136.6,509.9 L146.3,499.3 L156.0,493.4 L167.7,490.5 L175.4,493.4 L177.5,493.5 L170.0,464.0 L155.6,427.7 L145.5,401.2 L134.8,372.1 L131.5,372.8Z" fill="#c9e9c1"/>
<path d="M107.2,311.8 L293.6,240.5 L327.1,329.7 L145.5,401.2 L134.8,372.1 L131.5,372.8Z" fill="#f7fcf5"/>
<path d="M564.6,322.1 L576.7,318.1 L582.7,314.1 L582.7,304.1 L578.7,296.1 L586.7,289.1 L600.7,286.0 L609.2,286.5 L626.5,292.3 L642.3,339.8 L622.2,348.5 L626.5,364.3 L635.1,375.9 L692.8,354.2 L705.8,381.6 L808.1,345.6 L825.4,387.4 L904.7,355.7 L909.0,375.9 L923.4,404.7 L926.2,424.0 L942.2,448.1 L972.3,504.2 L860.0,501.2 L649.5,494.3 L625.0,497.2 L642.3,550.5 L627.9,554.8 L616.4,559.1 L606.3,553.4 L589.0,559.1 L580.4,563.5 L574.6,550.5 L568.8,547.6 L560.2,553.4 L551.5,547.6 L540.6,541.1 L531.6,544.1 L531.6,528.1 L526.6,520.0 L520.5,494.5 L524.5,478.5 L512.5,458.4 L598.7,424.4Z" fill="#f7fcf5"/>
<path d="M392.3,740.5 L520.6,727.5 L518.6,734.5 L508.5,748.5 L429.3,832.0 L409.2,818.4 L404.3,810.7Z" fill="#f7fcf5"/>
<path d="M543.6,725.5 L565.7,721.5 L559.7,687.4 L590.7,685.4 L598.7,694.4 L633.7,690.3 L626.5,637.0 L678.3,635.5 L710.1,654.3 L730.3,671.6 L747.6,691.7 L756.2,714.8 L759.1,733.5 L770.6,717.7 L795.1,703.3 L816.7,691.7 L860.0,686.7 L864.0,688.7 L871.0,734.8 L888.8,776.8 L834.0,784.0 L802.3,786.9 L808.1,817.1 L730.3,827.2 L728.8,833.0 L702.9,838.8 L700.0,833.0 L620.7,840.2 L616.4,811.4 L560.2,815.7Z" fill="#f7fcf5"/>
<path d="M500.1,158.2 L606.3,116.4 L639.5,207.2 L534.6,247.0Z" fill="#7dc87c"/>
<path d="M276.7,349.6 L349.2,321.0 L349.2,330.1 L347.2,338.2 L343.1,343.2 L348.2,348.2 L364.2,356.2 L370.2,360.2 L371.2,370.2 L376.2,373.2 L389.2,374.2 L394.3,378.2 L389.2,384.3 L398.3,396.3 L402.3,398.3 L405.3,392.3 L402.3,386.3 L404.3,381.3 L412.3,378.2 L416.3,374.2 L418.3,376.2 L426.3,381.3 L432.3,380.3 L431.3,377.2 L435.3,372.2 L436.3,363.2 L440.4,357.2 L447.4,352.2 L456.4,350.2 L468.4,352.2 L472.4,361.2 L483.4,362.2 L488.5,376.2 L484.5,388.3 L476.4,402.3 L470.4,412.3 L471.4,424.4 L476.4,430.4 L486.5,432.4 L490.5,447.4 L462.4,459.4 L318.1,463.4 L317.0,464.0 L296.9,411.8 L298.3,410.4Z" fill="#7dc87c"/>
<path d="M648.1,231.7 L672.6,230.3 L687.0,223.1 L718.7,221.6 L727.4,218.8 L738.9,214.4 L759.1,213.0 L785.0,283.6 L789.3,289.4 L808.1,345.6 L705.8,381.6 L692.8,354.2 L635.1,375.9 L626.5,364.3 L622.2,348.5 L642.3,339.8 L626.5,292.3 L609.2,286.5 L610.7,284.0 L620.7,272.1 L623.6,263.4 L620.7,249.0 L626.5,240.4Z" fill="#7dc87c"/>
<path d="M759.1,213.0 L770.6,211.0 L790.8,217.3 L811.0,211.6 L828.3,200.0 L845.5,185.6 L854.2,168.3 L857.1,151.0 L867.2,175.5 L924.8,153.9 L933.5,178.4 L994.0,155.3 L1012.8,208.7 L985.4,221.6 L1014.2,305.2 L1002.7,313.9 L904.7,355.7 L825.4,387.4 L808.1,345.6 L789.3,289.4 L785.0,283.6Z" fill="#7dc87c"/>
<path d="M511.5,644.3 L510.6,609.2 L619.3,598.0 L626.5,637.0 L633.7,690.3 L598.7,694.4 L590.7,685.4 L559.7,687.4 L565.7,721.5 L467.5,730.5 L464.4,716.5 L464.4,704.4 L460.4,694.4 L455.4,678.4 L457.4,670.4 L455.4,660.3 L457.4,647.3Z" fill="#7dc87c"/>
<path d="M642.3,550.5 L649.5,547.6 L655.3,556.2 L661.1,557.7 L689.9,555.7 L704.3,559.1 L718.7,570.7 L730.3,575.0 L738.9,572.1 L744.7,564.9 L759.1,562.0 L770.6,566.3 L795.1,703.3 L770.6,717.7 L759.1,733.5 L756.2,714.8 L747.6,691.7 L730.3,671.6 L710.1,654.3 L678.3,635.5 L658.2,616.8 L646.7,596.6 L638.0,579.3 L627.9,554.8Z" fill="#7dc87c"/>
<path d="M875.0,685.7 L919.1,624.5 L964.3,610.5 L975.3,673.6 L974.3,676.6 L980.3,719.7 L871.0,734.8 L864.0,688.7Z" fill="#7dc87c"/>
<path d="M954.2,550.3 L964.3,550.3 L978.3,544.3 L992.3,542.3 L1000.4,536.3 L1014.4,528.3 L1020.4,530.3 L1022.4,540.3 L1029.4,544.3 L1052.5,663.6 L1055.5,665.6 L1061.5,708.7 L980.3,719.7 L974.3,676.6 L975.3,673.6 L964.3,610.5Z" fill="#7dc87c"/>
<path d="M606.3,116.4 L763.4,54.4 L795.1,100.6 L816.7,122.2 L828.3,130.8 L845.5,139.5 L857.1,151.0 L854.2,168.3 L845.5,185.6 L828.3,200.0 L811.0,211.6 L790.8,217.3 L770.6,211.0 L759.1,213.0 L738.9,214.4 L727.4,218.8 L718.7,221.6 L687.0,223.1 L672.6,230.3 L648.1,231.7 L639.5,207.2Z" fill="#2b924b"/>
<path d="M145.5,401.2 L276.7,349.6 L298.3,410.4 L296.9,411.8 L317.0,464.0 L330.9,504.1 L267.7,489.5 L259.0,491.5 L255.1,487.6 L243.4,492.5 L233.7,506.1 L239.5,532.3 L231.8,535.2 L229.8,543.9 L234.7,549.8 L237.6,568.2 L192.9,584.7 L189.0,577.0 L187.1,563.4 L194.9,551.7 L202.6,542.0 L204.6,532.3 L198.7,524.5 L187.1,515.8 L181.3,501.2 L177.5,493.5 L170.0,464.0 L155.6,427.7Z" fill="#2b924b"/>
<path d="M349.2,321.0 L464.4,275.0 L467.4,290.1 L464.4,296.1 L467.4,300.1 L480.4,297.1 L482.4,303.1 L496.5,302.1 L500.5,299.1 L506.5,296.1 L509.5,300.1 L520.5,301.1 L524.5,308.1 L528.5,317.1 L544.6,312.1 L545.6,318.1 L544.6,325.1 L537.6,332.2 L535.6,342.2 L540.6,352.2 L539.6,356.2 L530.6,357.2 L508.5,355.2 L500.5,350.2 L493.5,345.2 L484.5,352.2 L483.4,362.2 L472.4,361.2 L468.4,352.2 L456.4,350.2 L447.4,352.2 L440.4,357.2 L436.3,363.2 L435.3,372.2 L431.3,377.2 L432.3,380.3 L426.3,381.3 L418.3,376.2 L416.3,374.2 L412.3,378.2 L404.3,381.3 L402.3,386.3 L405.3,392.3 L402.3,398.3 L398.3,396.3 L389.2,384.3 L394.3,378.2 L389.2,374.2 L376.2,373.2 L371.2,370.2 L370.2,360.2 L364.2,356.2 L348.2,348.2 L343.1,343.2 L347.2,338.2 L349.2,330.1 L349.2,321.0Z" fill="#2b924b"/>
<path d="M564.6,322.1 L598.7,424.4 L512.5,458.4 L512.5,444.4 L508.5,436.4 L500.5,434.4 L486.5,432.4 L476.4,430.4 L471.4,424.4 L470.4,412.3 L476.4,402.3 L484.5,388.3 L488.5,376.2 L483.4,362.2 L483.4,362.2 L484.5,352.2 L493.5,345.2 L500.5,350.2 L508.5,355.2 L530.6,357.2 L539.6,356.2 L540.6,352.2 L535.6,342.2 L537.6,332.2 L544.6,325.1Z" fill="#2b924b"/>
<path d="M904.7,355.7 L1002.7,313.9 L1005.5,328.3 L1002.7,331.2 L1011.3,332.6 L1035.8,396.0 L1053.1,406.1 L1058.9,416.2 L1020.4,432.0 L1032.4,462.1 L1003.4,475.1 L1004.4,488.2 L1000.4,492.2 L1002.4,498.2 L998.3,500.2 L1000.4,506.2 L996.3,516.2 L996.3,526.3 L1000.4,536.3 L992.3,542.3 L990.3,536.3 L984.3,524.3 L972.3,504.2 L942.2,448.1 L926.2,424.0 L923.4,404.7 L909.0,375.9Z" fill="#2b924b"/>
<path d="M404.3,547.1 L420.4,546.1 L448.4,541.1 L458.4,536.1 L464.4,534.1 L476.5,536.1 L490.5,531.1 L505.5,524.0 L511.5,644.3 L457.4,647.3 L400.3,657.3 L398.3,648.3 L391.3,636.3 L389.3,622.3 L391.3,608.2 L389.3,592.2 L392.3,578.2 L394.3,572.1 L402.3,568.1 L403.3,562.1 L401.3,554.1 L404.3,547.1Z" fill="#2b924b"/>
<path d="M394.3,572.1 L392.3,578.2 L389.3,592.2 L391.3,608.2 L389.3,622.3 L391.3,636.3 L398.3,648.3 L400.3,657.3 L457.4,647.3 L455.4,660.3 L457.4,670.4 L455.4,678.4 L460.4,694.4 L464.4,704.4 L464.4,716.5 L467.5,730.5 L392.3,740.5 L300.1,746.5 L289.1,676.1 L283.3,668.3 L286.2,658.6 L305.1,656.3 L314.1,649.3 L321.1,646.3 L321.1,635.3 L336.2,635.3 L344.2,631.3 L356.2,623.3 L370.2,616.2 L378.3,606.2 L384.3,588.2 L392.3,572.1Z" fill="#2b924b"/>
<path d="M770.6,566.3 L785.0,564.9 L790.8,566.3 L802.3,575.0 L816.7,573.5 L828.3,575.0 L842.7,580.7 L860.0,587.4 L874.0,582.4 L882.1,588.4 L894.1,584.4 L902.1,584.4 L910.1,587.4 L920.2,586.4 L940.2,579.4 L944.2,572.4 L941.2,564.4 L948.2,554.3 L954.2,550.3 L964.3,610.5 L919.1,624.5 L875.0,685.7 L860.0,686.7 L816.7,691.7 L795.1,703.3Z" fill="#2b924b"/>
<path d="M293.6,240.5 L396.3,200.0 L430.9,287.9 L327.1,329.7Z" fill="#00461d"/>
<path d="M534.6,247.0 L639.5,207.2 L648.1,231.7 L626.5,240.4 L620.7,249.0 L623.6,263.4 L620.7,272.1 L610.7,284.0 L600.7,286.0 L586.7,289.1 L578.7,296.1 L582.7,304.1 L582.7,314.1 L576.7,318.1 L564.6,322.1 L544.6,325.1 L545.6,318.1 L544.6,312.1 L528.5,317.1 L524.5,308.1 L520.5,301.1 L509.5,300.1 L506.5,296.1 L500.5,299.1 L496.5,302.1 L482.4,303.1 L480.4,297.1 L467.4,300.1 L464.4,296.1 L467.4,290.1 L464.4,275.0Z" fill="#00461d"/>
<path d="M177.5,493.5 L181.3,501.2 L187.1,515.8 L198.7,524.5 L204.6,532.3 L202.6,542.0 L194.9,551.7 L187.1,563.4 L189.0,577.0 L192.9,584.7 L237.6,568.2 L234.7,549.8 L229.8,543.9 L231.8,535.2 L239.5,532.3 L233.7,506.1 L243.4,492.5 L255.1,487.6 L259.0,491.5 L267.7,489.5 L330.9,504.1 L399.3,521.0 L404.3,547.1 L401.3,554.1 L403.3,562.1 L402.3,568.1 L394.3,572.1 L392.3,572.1 L384.3,588.2 L378.3,606.2 L370.2,616.2 L356.2,623.3 L344.2,631.3 L336.2,635.3 L321.1,635.3 L321.1,646.3 L314.1,649.3 L305.1,656.3 L286.2,658.6 L283.3,668.3 L289.1,676.1 L300.1,746.5 L392.3,740.5 L404.3,810.7 L409.2,818.4 L429.3,832.0 L455.3,855.9 L475.4,923.9 L443.7,955.7 L432.2,961.5 L391.9,973.0 L325.6,993.2 L273.7,1004.7 L239.2,1010.4 L221.9,1010.4 L193.1,924.0 L184.4,889.0 L197.4,884.7 L187.3,854.4 L162.8,854.4 L158.5,847.2 L145.5,847.2 L144.1,838.6 L151.3,835.7 L141.2,804.0 L93.6,817.0 L84.1,784.1 L58.9,713.0 L62.7,712.0 L49.1,668.3 L32.6,655.7 L34.6,648.9 L35.5,635.3 L31.7,623.6 L26.8,611.9 L29.7,602.2 L39.4,596.4 L51.1,586.7 L60.8,577.9 L76.3,569.2 L88.0,555.6 L100.6,537.1 L111.3,526.5 L126.9,512.9 L136.6,509.9 L146.3,499.3 L156.0,493.4 L167.7,490.5 L175.4,493.4Z" fill="#00461d"/>
<path d="M107.2,311.8 L293.6,240.5 L396.3,200.0 L500.1,158.2 L606.3,116.4 L763.4,54.4 L795.1,100.6 L816.7,122.2 L828.3,130.8 L845.5,139.5 L857.1,151.0 L867.2,175.5 L924.8,153.9 L933.5,178.4 L994.0,155.3 L1012.8,208.7 L985.4,221.6 L1014.2,305.2 L1002.7,313.9 L1005.5,328.3 L1002.7,331.2 L1011.3,332.6 L1035.8,396.0 L1053.1,406.1 L1058.9,416.2 L1020.4,432.0 L1032.4,462.1 L1003.4,475.1 L1004.4,488.2 L1000.4,492.2 L1002.4,498.2 L998.3,500.2 L1000.4,506.2 L996.3,516.2 L996.3,526.3 L1000.4,536.3 L1014.4,528.3 L1020.4,530.3 L1022.4,540.3 L1029.4,544.3 L1052.5,663.6 L1055.5,665.6 L1061.5,708.7 L1073.3,756.6 L1080.5,756.6 L1086.3,776.8 L1051.7,789.7 L1056.0,818.6 L1012.8,824.3 L1015.7,856.0 L1014.2,857.5 L1027.2,924.1 L1038.7,980.2 L1037.3,981.7 L1056.0,1084.0 L701.4,1203.6 L540.0,1256.9 L478.3,1275.5 L360.2,1317.3 L357.3,1308.7 L394.8,1269.8 L409.2,1252.5 L440.9,1200.6 L416.4,1207.8 L371.7,1063.8 L348.7,1069.5 L344.3,1050.8 L366.0,1043.6 L360.2,1026.3 L317.0,1040.7 L314.1,1036.4 L269.4,1050.8 L249.3,1055.1 L242.0,1034.9 L230.5,1037.8 L221.9,1010.4 L193.1,924.0 L184.4,889.0 L197.4,884.7 L187.3,854.4 L162.8,854.4 L158.5,847.2 L145.5,847.2 L144.1,838.6 L151.3,835.7 L141.2,804.0 L93.6,817.0 L84.1,784.1 L58.9,713.0 L62.7,712.0 L49.1,668.3 L32.6,655.7 L34.6,648.9 L35.5,635.3 L31.7,623.6 L26.8,611.9 L29.7,602.2 L39.4,596.4 L51.1,586.7 L60.8,577.9 L76.3,569.2 L88.0,555.6 L100.6,537.1 L111.3,526.5 L126.9,512.9 L136.6,509.9 L146.3,499.3 L156.0,493.4 L167.7,490.5 L175.4,493.4 L177.5,493.5 L170.0,464.0 L155.6,427.7 L145.5,401.2 L134.8,372.1 L131.5,372.8Z" fill="none" stroke="#fb8012" stroke-width="1.9" stroke-linejoin="round"/>
<path d="M107.2,311.8 L293.6,240.5 L327.1,329.7 L145.5,401.2 L134.8,372.1 L131.5,372.8Z" fill="none" stroke="#fb8012" stroke-width="1.9" stroke-linejoin="round"/>
<path d="M564.6,322.1 L576.7,318.1 L582.7,314.1 L582.7,304.1 L578.7,296.1 L586.7,289.1 L600.7,286.0 L609.2,286.5 L626.5,292.3 L642.3,339.8 L622.2,348.5 L626.5,364.3 L635.1,375.9 L692.8,354.2 L705.8,381.6 L808.1,345.6 L825.4,387.4 L904.7,355.7 L909.0,375.9 L923.4,404.7 L926.2,424.0 L942.2,448.1 L972.3,504.2 L860.0,501.2 L649.5,494.3 L625.0,497.2 L642.3,550.5 L627.9,554.8 L616.4,559.1 L606.3,553.4 L589.0,559.1 L580.4,563.5 L574.6,550.5 L568.8,547.6 L560.2,553.4 L551.5,547.6 L540.6,541.1 L531.6,544.1 L531.6,528.1 L526.6,520.0 L520.5,494.5 L524.5,478.5 L512.5,458.4 L598.7,424.4Z" fill="none" stroke="#fb8012" stroke-width="1.9" stroke-linejoin="round"/>
<path d="M392.3,740.5 L520.6,727.5 L518.6,734.5 L508.5,748.5 L429.3,832.0 L409.2,818.4 L404.3,810.7Z" fill="none" stroke="#fb8012" stroke-width="1.9" stroke-linejoin="round"/>
<path d="M543.6,725.5 L565.7,721.5 L559.7,687.4 L590.7,685.4 L598.7,694.4 L633.7,690.3 L626.5,637.0 L678.3,635.5 L710.1,654.3 L730.3,671.6 L747.6,691.7 L756.2,714.8 L759.1,733.5 L770.6,717.7 L795.1,703.3 L816.7,691.7 L860.0,686.7 L864.0,688.7 L871.0,734.8 L888.8,776.8 L834.0,784.0 L802.3,786.9 L808.1,817.1 L730.3,827.2 L728.8,833.0 L702.9,838.8 L700.0,833.0 L620.7,840.2 L616.4,811.4 L560.2,815.7Z" fill="none" stroke="#fb8012" stroke-width="1.9" stroke-linejoin="round"/>
<path d="M500.1,158.2 L606.3,116.4 L639.5,207.2 L534.6,247.0Z" fill="none" stroke="#fb8012" stroke-width="1.9" stroke-linejoin="round"/>
<path d="M276.7,349.6 L349.2,321.0 L349.2,330.1 L347.2,338.2 L343.1,343.2 L348.2,348.2 L364.2,356.2 L370.2,360.2 L371.2,370.2 L376.2,373.2 L389.2,374.2 L394.3,378.2 L389.2,384.3 L398.3,396.3 L402.3,398.3 L405.3,392.3 L402.3,386.3 L404.3,381.3 L412.3,378.2 L416.3,374.2 L418.3,376.2 L426.3,381.3 L432.3,380.3 L431.3,377.2 L435.3,372.2 L436.3,363.2 L440.4,357.2 L447.4,352.2 L456.4,350.2 L468.4,352.2 L472.4,361.2 L483.4,362.2 L488.5,376.2 L484.5,388.3 L476.4,402.3 L470.4,412.3 L471.4,424.4 L476.4,430.4 L486.5,432.4 L490.5,447.4 L462.4,459.4 L318.1,463.4 L317.0,464.0 L296.9,411.8 L298.3,410.4Z" fill="none" stroke="#fb8012" stroke-width="1.9" stroke-linejoin="round"/>
<path d="M648.1,231.7 L672.6,230.3 L687.0,223.1 L718.7,221.6 L727.4,218.8 L738.9,214.4 L759.1,213.0 L785.0,283.6 L789.3,289.4 L808.1,345.6 L705.8,381.6 L692.8,354.2 L635.1,375.9 L626.5,364.3 L622.2,348.5 L642.3,339.8 L626.5,292.3 L609.2,286.5 L610.7,284.0 L620.7,272.1 L623.6,263.4 L620.7,249.0 L626.5,240.4Z" fill="none" stroke="#fb8012" stroke-width="1.9" stroke-linejoin="round"/>
<path d="M759.1,213.0 L770.6,211.0 L790.8,217.3 L811.0,211.6 L828.3,200.0 L845.5,185.6 L854.2,168.3 L857.1,151.0 L867.2,175.5 L924.8,153.9 L933.5,178.4 L994.0,155.3 L1012.8,208.7 L985.4,221.6 L1014.2,305.2 L1002.7,313.9 L904.7,355.7 L825.4,387.4 L808.1,345.6 L789.3,289.4 L785.0,283.6Z" fill="none" stroke="#fb8012" stroke-width="1.9" stroke-linejoin="round"/>
<path d="M511.5,644.3 L510.6,609.2 L619.3,598.0 L626.5,637.0 L633.7,690.3 L598.7,694.4 L590.7,685.4 L559.7,687.4 L565.7,721.5 L467.5,730.5 L464.4,716.5 L464.4,704.4 L460.4,694.4 L455.4,678.4 L457.4,670.4 L455.4,660.3 L457.4,647.3Z" fill="none" stroke="#fb8012" stroke-width="1.9" stroke-linejoin="round"/>
<path d="M642.3,550.5 L649.5,547.6 L655.3,556.2 L661.1,557.7 L689.9,555.7 L704.3,559.1 L718.7,570.7 L730.3,575.0 L738.9,572.1 L744.7,564.9 L759.1,562.0 L770.6,566.3 L795.1,703.3 L770.6,717.7 L759.1,733.5 L756.2,714.8 L747.6,691.7 L730.3,671.6 L710.1,654.3 L678.3,635.5 L658.2,616.8 L646.7,596.6 L638.0,579.3 L627.9,554.8Z" fill="none" stroke="#fb8012" stroke-width="1.9" stroke-linejoin="round"/>
<path d="M875.0,685.7 L919.1,624.5 L964.3,610.5 L975.3,673.6 L974.3,676.6 L980.3,719.7 L871.0,734.8 L864.0,688.7Z" fill="none" stroke="#fb8012" stroke-width="1.9" stroke-linejoin="round"/>
<path d="M954.2,550.3 L964.3,550.3 L978.3,544.3 L992.3,542.3 L1000.4,536.3 L1014.4,528.3 L1020.4,530.3 L1022.4,540.3 L1029.4,544.3 L1052.5,663.6 L1055.5,665.6 L1061.5,708.7 L980.3,719.7 L974.3,676.6 L975.3,673.6 L964.3,610.5Z" fill="none" stroke="#fb8012" stroke-width="1.9" stroke-linejoin="round"/>
<path d="M606.3,116.4 L763.4,54.4 L795.1,100.6 L816.7,122.2 L828.3,130.8 L845.5,139.5 L857.1,151.0 L854.2,168.3 L845.5,185.6 L828.3,200.0 L811.0,211.6 L790.8,217.3 L770.6,211.0 L759.1,213.0 L738.9,214.4 L727.4,218.8 L718.7,221.6 L687.0,223.1 L672.6,230.3 L648.1,231.7 L639.5,207.2Z" fill="none" stroke="#fb8012" stroke-width="1.9" stroke-linejoin="round"/>
<path d="M145.5,401.2 L276.7,349.6 L298.3,410.4 L296.9,411.8 L317.0,464.0 L330.9,504.1 L267.7,489.5 L259.0,491.5 L255.1,487.6 L243.4,492.5 L233.7,506.1 L239.5,532.3 L231.8,535.2 L229.8,543.9 L234.7,549.8 L237.6,568.2 L192.9,584.7 L189.0,577.0 L187.1,563.4 L194.9,551.7 L202.6,542.0 L204.6,532.3 L198.7,524.5 L187.1,515.8 L181.3,501.2 L177.5,493.5 L170.0,464.0 L155.6,427.7Z" fill="none" stroke="#fb8012" stroke-width="1.9" stroke-linejoin="round"/>
<path d="M349.2,321.0 L464.4,275.0 L467.4,290.1 L464.4,296.1 L467.4,300.1 L480.4,297.1 L482.4,303.1 L496.5,302.1 L500.5,299.1 L506.5,296.1 L509.5,300.1 L520.5,301.1 L524.5,308.1 L528.5,317.1 L544.6,312.1 L545.6,318.1 L544.6,325.1 L537.6,332.2 L535.6,342.2 L540.6,352.2 L539.6,356.2 L530.6,357.2 L508.5,355.2 L500.5,350.2 L493.5,345.2 L484.5,352.2 L483.4,362.2 L472.4,361.2 L468.4,352.2 L456.4,350.2 L447.4,352.2 L440.4,357.2 L436.3,363.2 L435.3,372.2 L431.3,377.2 L432.3,380.3 L426.3,381.3 L418.3,376.2 L416.3,374.2 L412.3,378.2 L404.3,381.3 L402.3,386.3 L405.3,392.3 L402.3,398.3 L398.3,396.3 L389.2,384.3 L394.3,378.2 L389.2,374.2 L376.2,373.2 L371.2,370.2 L370.2,360.2 L364.2,356.2 L348.2,348.2 L343.1,343.2 L347.2,338.2 L349.2,330.1 L349.2,321.0Z" fill="none" stroke="#fb8012" stroke-width="1.9" stroke-linejoin="round"/>
<path d="M564.6,322.1 L598.7,424.4 L512.5,458.4 L512.5,444.4 L508.5,436.4 L500.5,434.4 L486.5,432.4 L476.4,430.4 L471.4,424.4 L470.4,412.3 L476.4,402.3 L484.5,388.3 L488.5,376.2 L483.4,362.2 L483.4,362.2 L484.5,352.2 L493.5,345.2 L500.5,350.2 L508.5,355.2 L530.6,357.2 L539.6,356.2 L540.6,352.2 L535.6,342.2 L537.6,332.2 L544.6,325.1Z" fill="none" stroke="#fb8012" stroke-width="1.9" stroke-linejoin="round"/>
<path d="M904.7,355.7 L1002.7,313.9 L1005.5,328.3 L1002.7,331.2 L1011.3,332.6 L1035.8,396.0 L1053.1,406.1 L1058.9,416.2 L1020.4,432.0 L1032.4,462.1 L1003.4,475.1 L1004.4,488.2 L1000.4,492.2 L1002.4,498.2 L998.3,500.2 L1000.4,506.2 L996.3,516.2 L996.3,526.3 L1000.4,536.3 L992.3,542.3 L990.3,536.3 L984.3,524.3 L972.3,504.2 L942.2,448.1 L926.2,424.0 L923.4,404.7 L909.0,375.9Z" fill="none" stroke="#fb8012" stroke-width="1.9" stroke-linejoin="round"/>
<path d="M404.3,547.1 L420.4,546.1 L448.4,541.1 L458.4,536.1 L464.4,534.1 L476.5,536.1 L490.5,531.1 L505.5,524.0 L511.5,644.3 L457.4,647.3 L400.3,657.3 L398.3,648.3 L391.3,636.3 L389.3,622.3 L391.3,608.2 L389.3,592.2 L392.3,578.2 L394.3,572.1 L402.3,568.1 L403.3,562.1 L401.3,554.1 L404.3,547.1Z" fill="none" stroke="#fb8012" stroke-width="1.9" stroke-linejoin="round"/>
<path d="M394.3,572.1 L392.3,578.2 L389.3,592.2 L391.3,608.2 L389.3,622.3 L391.3,636.3 L398.3,648.3 L400.3,657.3 L457.4,647.3 L455.4,660.3 L457.4,670.4 L455.4,678.4 L460.4,694.4 L464.4,704.4 L464.4,716.5 L467.5,730.5 L392.3,740.5 L300.1,746.5 L289.1,676.1 L283.3,668.3 L286.2,658.6 L305.1,656.3 L314.1,649.3 L321.1,646.3 L321.1,635.3 L336.2,635.3 L344.2,631.3 L356.2,623.3 L370.2,616.2 L378.3,606.2 L384.3,588.2 L392.3,572.1Z" fill="none" stroke="#fb8012" stroke-width="1.9" stroke-linejoin="round"/>
<path d="M770.6,566.3 L785.0,564.9 L790.8,566.3 L802.3,575.0 L816.7,573.5 L828.3,575.0 L842.7,580.7 L860.0,587.4 L874.0,582.4 L882.1,588.4 L894.1,584.4 L902.1,584.4 L910.1,587.4 L920.2,586.4 L940.2,579.4 L944.2,572.4 L941.2,564.4 L948.2,554.3 L954.2,550.3 L964.3,610.5 L919.1,624.5 L875.0,685.7 L860.0,686.7 L816.7,691.7 L795.1,703.3Z" fill="none" stroke="#fb8012" stroke-width="1.9" stroke-linejoin="round"/>
<path d="M293.6,240.5 L396.3,200.0 L430.9,287.9 L327.1,329.7Z" fill="none" stroke="#fb8012" stroke-width="1.9" stroke-linejoin="round"/>
<path d="M534.6,247.0 L639.5,207.2 L648.1,231.7 L626.5,240.4 L620.7,249.0 L623.6,263.4 L620.7,272.1 L610.7,284.0 L600.7,286.0 L586.7,289.1 L578.7,296.1 L582.7,304.1 L582.7,314.1 L576.7,318.1 L564.6,322.1 L544.6,325.1 L545.6,318.1 L544.6,312.1 L528.5,317.1 L524.5,308.1 L520.5,301.1 L509.5,300.1 L506.5,296.1 L500.5,299.1 L496.5,302.1 L482.4,303.1 L480.4,297.1 L467.4,300.1 L464.4,296.1 L467.4,290.1 L464.4,275.0Z" fill="none" stroke="#fb8012" stroke-width="1.9" stroke-linejoin="round"/>
<path d="M177.5,493.5 L181.3,501.2 L187.1,515.8 L198.7,524.5 L204.6,532.3 L202.6,542.0 L194.9,551.7 L187.1,563.4 L189.0,577.0 L192.9,584.7 L237.6,568.2 L234.7,549.8 L229.8,543.9 L231.8,535.2 L239.5,532.3 L233.7,506.1 L243.4,492.5 L255.1,487.6 L259.0,491.5 L267.7,489.5 L330.9,504.1 L399.3,521.0 L404.3,547.1 L401.3,554.1 L403.3,562.1 L402.3,568.1 L394.3,572.1 L392.3,572.1 L384.3,588.2 L378.3,606.2 L370.2,616.2 L356.2,623.3 L344.2,631.3 L336.2,635.3 L321.1,635.3 L321.1,646.3 L314.1,649.3 L305.1,656.3 L286.2,658.6 L283.3,668.3 L289.1,676.1 L300.1,746.5 L392.3,740.5 L404.3,810.7 L409.2,818.4 L429.3,832.0 L455.3,855.9 L475.4,923.9 L443.7,955.7 L432.2,961.5 L391.9,973.0 L325.6,993.2 L273.7,1004.7 L239.2,1010.4 L221.9,1010.4 L193.1,924.0 L184.4,889.0 L197.4,884.7 L187.3,854.4 L162.8,854.4 L158.5,847.2 L145.5,847.2 L144.1,838.6 L151.3,835.7 L141.2,804.0 L93.6,817.0 L84.1,784.1 L58.9,713.0 L62.7,712.0 L49.1,668.3 L32.6,655.7 L34.6,648.9 L35.5,635.3 L31.7,623.6 L26.8,611.9 L29.7,602.2 L39.4,596.4 L51.1,586.7 L60.8,577.9 L76.3,569.2 L88.0,555.6 L100.6,537.1 L111.3,526.5 L126.9,512.9 L136.6,509.9 L146.3,499.3 L156.0,493.4 L167.7,490.5 L175.4,493.4Z" fill="none" stroke="#fb8012" stroke-width="1.9" stroke-linejoin="round"/>
<path d="M705.8,381.6 L725.9,442.2 L757.6,429.2 L760.5,445.1 L773.5,464.1 L790.8,481.3 L802.3,487.1 L813.9,489.9 L828.3,498.6" fill="none" stroke="#fb8012" stroke-width="1.9" stroke-linejoin="round"/>
<path d="M610.6,445.0 L643.8,432.1 L687.0,426.3 L724.5,432.1 L725.9,442.2" fill="none" stroke="#fb8012" stroke-width="1.9" stroke-linejoin="round"/>
<path d="M598.7,424.4 L610.6,445.0 L614.9,464.0 L625.0,497.2" fill="none" stroke="#fb8012" stroke-width="1.9" stroke-linejoin="round"/>
<path d="M635.1,691.7 L649.5,758.0 L666.8,786.9 L674.0,802.7 L617.8,809.9" fill="none" stroke="#fb8012" stroke-width="1.9" stroke-linejoin="round"/>
<path d="M795.1,703.3 L796.6,714.8 L805.2,735.0 L825.4,760.9 L831.1,775.3 L834.0,784.0" fill="none" stroke="#fb8012" stroke-width="1.9" stroke-linejoin="round"/>
<path d="M100.6,537.1 L171.5,757.7" fill="none" stroke="#fb8012" stroke-width="1.9" stroke-linejoin="round"/>
<path d="M192.9,584.7 L160.9,588.6 L174.5,671.2 L146.3,675.1" fill="none" stroke="#fb8012" stroke-width="1.9" stroke-linejoin="round"/>
<path d="M192.9,584.7 L200.7,594.5 L214.3,606.1 L224.0,607.1 L239.5,608.1 L253.2,617.8 L264.8,622.6 L282.3,629.4 L301.7,634.3 L321.1,635.3" fill="none" stroke="#fb8012" stroke-width="1.9" stroke-linejoin="round"/>
<path d="M171.5,757.7 L300.1,746.5" fill="none" stroke="#fb8012" stroke-width="1.9" stroke-linejoin="round"/>
<path d="M72.5,747.9 L78.3,745.0 L84.1,746.0 L88.0,748.9 L93.8,747.9 L103.5,753.8 L113.3,749.9 L118.1,742.1 L116.2,735.3 L106.5,730.4 L102.6,724.6 L101.6,717.8 L105.5,715.9 L111.3,719.8 L119.1,715.9 L125.9,716.9 L128.8,722.7 L138.5,722.7 L142.4,726.6 L148.2,728.5 L156.0,740.2 L163.8,742.1 L167.7,749.9 L164.7,754.7 L169.6,757.7 L181.3,760.6 L189.0,769.3 L196.8,777.1 L202.6,781.0 L213.2,773.8 L216.1,783.9 L230.5,792.5 L236.3,802.6 L242.0,799.7 L250.7,804.0 L262.2,805.5 L265.1,812.7 L260.8,822.8 L268.0,835.7 L273.7,844.4 L288.2,851.6 L311.2,861.7 L317.0,874.6 L328.5,880.4 L340.0,881.8 L345.8,894.8 L342.9,906.3 L354.4,916.4 L363.1,923.9 L374.6,929.8 L371.7,938.4 L383.2,942.7 L391.9,973.0" fill="none" stroke="#fb8012" stroke-width="1.9" stroke-linejoin="round"/>
<path d="M273.7,844.4 L293.9,840.0 L315.5,837.2 L317.0,840.0 L404.3,810.7" fill="none" stroke="#fb8012" stroke-width="1.9" stroke-linejoin="round"/>
<path d="M834.0,784.0 L842.7,821.4 L849.9,873.3 L851.3,876.2 L857.1,924.1 L867.2,971.6" fill="none" stroke="#fb8012" stroke-width="1.9" stroke-linejoin="round"/>
<path d="M678.3,834.4 L610.6,910.8 L603.4,924.0 L553.0,1007.6" fill="none" stroke="#fb8012" stroke-width="1.9" stroke-linejoin="round"/>
<path d="M553.0,1007.6 L728.8,987.4 L867.2,971.6" fill="none" stroke="#fb8012" stroke-width="1.9" stroke-linejoin="round"/>
<path d="M728.8,987.4 L733.1,1010.5 L744.7,1085.4 L740.3,1102.7 L730.3,1107.0 L710.1,1109.9 L695.7,1117.1 L691.3,1131.5 L701.4,1183.4 L701.4,1203.6" fill="none" stroke="#fb8012" stroke-width="1.9" stroke-linejoin="round"/>
<path d="M475.4,916.4 L540.0,909.2 L565.9,909.4 L597.7,912.3 L610.6,910.8" fill="none" stroke="#fb8012" stroke-width="1.9" stroke-linejoin="round"/>
<path d="M505.5,524.0 L526.6,520.0" fill="none" stroke="#fb8012" stroke-width="1.9" stroke-linejoin="round"/>
<path d="M625.0,497.2 L649.5,494.3 L860.0,501.2 L972.3,504.2 L984.3,524.3 L990.3,536.3 L992.3,542.3 L978.3,544.3 L964.3,550.3 L954.2,550.3" fill="none" stroke="#fb8012" stroke-width="1.9" stroke-linejoin="round"/>
<rect x="481.5" y="519.6" width="6" height="3" fill="#e31a1c"/></svg><div style="position:absolute;left:1752px;top:306.5px;height:51.0px;font-size:25.5px;line-height:51.0px;color:#000;font-weight:normal;white-space:nowrap;">Browser</div><svg style="position:absolute;left:2496.3px;top:322.0px" width="19" height="19" viewBox="0 0 19 19"><rect x="1" y="1" width="17" height="17" rx="4" fill="none" stroke="#777" stroke-width="1.6"/><rect x="5" y="7" width="7" height="7" rx="1.5" fill="none" stroke="#777" stroke-width="1.6"/><path d="M8 7V4.5H14V10.5H12" fill="none" stroke="#777" stroke-width="1.6"/></svg><svg style="position:absolute;left:2520.4px;top:322.0px" width="19" height="19" viewBox="0 0 19 19"><rect x="1" y="1" width="17" height="17" rx="4" fill="none" stroke="#777" stroke-width="1.6"/><path d="M5 5L14 14M14 5L5 14" stroke="#666" stroke-width="3"/></svg><svg style="position:absolute;left:1756.9px;top:360.5px" width="26" height="26" viewBox="0 0 26 26"><rect x="2" y="2" width="18" height="18" fill="none" stroke="#777" stroke-width="1.5"/><rect x="13" y="13" width="11" height="11" rx="2.5" fill="#5b9a5b"/><path d="M18.5 15.2V21.8M15.2 18.5H21.8" stroke="#fff" stroke-width="2.6"/></svg><svg style="position:absolute;left:1801.5px;top:360.5px" width="26" height="26" viewBox="0 0 26 26"><path d="M3 12A9 9 0 0 1 20 6L23 2V11H14L17 8A6 6 0 0 0 7 12Z" fill="#4d8ad0"/><path d="M21 12A9 9 0 0 1 4 18L1 22V13H10L7 16A6 6 0 0 0 17 12Z" fill="#4d8ad0"/></svg><svg style="position:absolute;left:1844.2px;top:360.5px" width="26" height="26" viewBox="0 0 26 26"><path d="M2 2H22V6L14 14V24L10 20V14L2 6Z" fill="#6a98cc" stroke="#3f6fa4" stroke-width="1.2"/><rect x="2" y="2" width="20" height="3.5" fill="#f3d53c"/></svg><svg style="position:absolute;left:1887.6px;top:360.5px" width="26" height="26" viewBox="0 0 26 26"><path d="M2 3H24M5 3V21H7M5 12H7" stroke="#aaa" stroke-width="1.5" fill="none"/><rect x="7" y="8" width="5" height="5" fill="#f39a28"/><rect x="7" y="17" width="5" height="5" fill="#f39a28"/><path d="M14 22H20V10H24L17 2L10 10H14Z" fill="#6a98cc" stroke="#2f4f7a"/></svg><svg style="position:absolute;left:1929.8px;top:360.5px" width="26" height="26" viewBox="0 0 26 26"><circle cx="12" cy="12" r="11" fill="#6a98cc" stroke="#3f6fa4"/><text x="8" y="19" font-size="16" font-style="italic" font-weight="bold" font-family="Liberation Serif" fill="#fff">i</text></svg><div style="position:absolute;left:1744px;top:401px;width:798px;height:1235px;background:#fff;border:1px solid #c6c6c6;box-sizing:border-box"></div><svg style="position:absolute;left:1756.0px;top:412.9px" width="7" height="13" viewBox="0 0 7 13"><path d="M0 0V13L7 6.5Z" fill="#555"/></svg><svg style="position:absolute;left:1779.0px;top:405.9px" width="27" height="27" viewBox="0 0 27 27"><path d="M13.5 1L17 10H26L19 16L22 26L13.5 20L5 26L8 16L1 10H10Z" fill="#f8e04e" stroke="#c9a72b" stroke-width="1.5"/></svg><div style="position:absolute;left:1816.8px;top:393.79999999999995px;height:51.2px;font-size:25.6px;line-height:51.2px;color:#000;font-weight:normal;white-space:nowrap;">Favorites</div><svg style="position:absolute;left:1756.0px;top:445.4px" width="7" height="13" viewBox="0 0 7 13"><path d="M0 0V13L7 6.5Z" fill="#555"/></svg><svg style="position:absolute;left:1779.0px;top:438.4px" width="27" height="27" viewBox="0 0 27 27"><path d="M3 3H24V25H3Z" fill="#eee" stroke="#999" stroke-width="1.3"/><path d="M3 3C0 3 0 8 3 8" fill="none" stroke="#999"/><path d="M14 1H19V11L16.5 8L14 11Z" fill="#6a98cc" stroke="#3f6fa4"/></svg><div style="position:absolute;left:1816.8px;top:426.3299999999999px;height:51.2px;font-size:25.6px;line-height:51.2px;color:#000;font-weight:normal;white-space:nowrap;">Spatial Bookmarks</div><svg style="position:absolute;left:1756.0px;top:478.0px" width="7" height="13" viewBox="0 0 7 13"><path d="M0 0V13L7 6.5Z" fill="#555"/></svg><svg style="position:absolute;left:1779.0px;top:471.0px" width="27" height="27" viewBox="0 0 27 27"><rect x="2" y="4" width="23" height="20" fill="#f4f4f4" stroke="#888" stroke-width="1.3"/><path d="M7 14L13.5 8L20 14M9 13V19H18V13" fill="none" stroke="#333" stroke-width="1.5"/></svg><div style="position:absolute;left:1816.8px;top:458.85999999999996px;height:51.2px;font-size:25.6px;line-height:51.2px;color:#000;font-weight:normal;white-space:nowrap;">Home</div><svg style="position:absolute;left:1756.0px;top:510.5px" width="7" height="13" viewBox="0 0 7 13"><path d="M0 0V13L7 6.5Z" fill="#555"/></svg><svg style="position:absolute;left:1779.0px;top:503.5px" width="27" height="27" viewBox="0 0 27 27"><path d="M2 4H11L13 7H25V24H2Z" fill="#eee" stroke="#888" stroke-width="1.3"/><path d="M2 10H25" stroke="#888" stroke-width="1.2"/></svg><div style="position:absolute;left:1816.8px;top:491.39px;height:51.2px;font-size:25.6px;line-height:51.2px;color:#000;font-weight:normal;white-space:nowrap;">/</div><svg style="position:absolute;left:1779.0px;top:536.0px" width="27" height="27" viewBox="0 0 27 27"><path d="M2 12L8 8H26V20L20 25H2Z" fill="#e8c42e" stroke="#222" stroke-width="1"/><path d="M2 12H20V25M20 12L26 8" fill="none" stroke="#222"/><circle cx="13" cy="9" r="8" fill="#6a98cc" stroke="#3f6fa4"/><path d="M7 8Q12 5 15 9T20 8" stroke="#2a4a7a" stroke-width="1.5" fill="none"/></svg><div style="position:absolute;left:1816.8px;top:523.92px;height:51.2px;font-size:25.6px;line-height:51.2px;color:#000;font-weight:normal;white-space:nowrap;">GeoPackage</div><svg style="position:absolute;left:1779.0px;top:568.5px" width="27" height="27" viewBox="0 0 27 27"><path d="M2 26C5 18 12 7 25 2C24 10 17 19 5 22Z" fill="#7aa3d6" stroke="#2f4f7a" stroke-width="1.2"/></svg><div style="position:absolute;left:1816.8px;top:556.4499999999999px;height:51.2px;font-size:25.6px;line-height:51.2px;color:#000;font-weight:normal;white-space:nowrap;">SpatiaLite</div><svg style="position:absolute;left:1756.0px;top:608.1px" width="7" height="13" viewBox="0 0 7 13"><path d="M0 0V13L7 6.5Z" fill="#555"/></svg><svg style="position:absolute;left:1779.0px;top:601.1px" width="27" height="27" viewBox="0 0 27 27"><path d="M6 3C10 0 20 0 23 5C26 10 24 15 21 17V23C20 26 17 26 16 23V19C13 20 10 20 8 17C3 16 1 8 6 3Z" fill="#4a78b8" stroke="#1f3a5f" stroke-width="1.2"/><path d="M8 6C7 10 8 13 11 15M16 11V20" stroke="#fff" stroke-width="1.1" fill="none"/></svg><div style="position:absolute;left:1816.8px;top:588.9799999999999px;height:51.2px;font-size:25.6px;line-height:51.2px;color:#000;font-weight:normal;white-space:nowrap;">PostgreSQL</div><svg style="position:absolute;left:1779.0px;top:633.6px" width="27" height="27" viewBox="0 0 27 27"><rect x="2" y="2" width="23" height="23" fill="none" stroke="#2f4f7a" stroke-width="1.3" stroke-dasharray="2 2"/><rect x="5" y="5" width="17" height="17" fill="#6a98cc"/></svg><div style="position:absolute;left:1816.8px;top:621.51px;height:51.2px;font-size:25.6px;line-height:51.2px;color:#000;font-weight:normal;white-space:nowrap;">SAP HANA</div><svg style="position:absolute;left:1779.0px;top:666.1px" width="27" height="27" viewBox="0 0 27 27"><rect x="1" y="1" width="15" height="15" fill="none" stroke="#aac" stroke-width="1"/><rect x="5" y="5" width="15" height="15" fill="none" stroke="#99b" stroke-width="1"/><rect x="9" y="9" width="16" height="16" fill="#fff" stroke="#667" stroke-width="1.2"/><circle cx="17" cy="17" r="4" fill="none" stroke="#6a98cc" stroke-width="1.5"/></svg><div style="position:absolute;left:1816.8px;top:654.04px;height:51.2px;font-size:25.6px;line-height:51.2px;color:#000;font-weight:normal;white-space:nowrap;">STAC</div><svg style="position:absolute;left:1779.0px;top:698.7px" width="27" height="27" viewBox="0 0 27 27"><path d="M2 2C10 4 20 8 26 14C20 18 10 22 2 26C6 18 6 10 2 2Z" fill="#6a98cc" stroke="#2f4f7a" stroke-width="1.2"/><path d="M6 6Q10 14 6 22M11 8Q14 14 11 20" stroke="#2f4f7a" fill="none"/></svg><div style="position:absolute;left:1816.8px;top:686.5699999999999px;height:51.2px;font-size:25.6px;line-height:51.2px;color:#000;font-weight:normal;white-space:nowrap;">MS SQL Server</div><svg style="position:absolute;left:1756.0px;top:738.2px" width="7" height="13" viewBox="0 0 7 13"><path d="M0 0V13L7 6.5Z" fill="#555"/></svg><svg style="position:absolute;left:1779.0px;top:731.2px" width="27" height="27" viewBox="0 0 27 27"><circle cx="13.5" cy="13.5" r="12" fill="#9ec0e6" stroke="#4a6a90" stroke-width="1.2"/><path d="M5 8Q8 5 12 7L12 10Q9 12 6 11Z M15 5Q19 4 22 7L20 11Q17 10 15 9Z M9 15Q13 14 16 16L15 23Q11 21 9 19Z M19 14L23 15L22 20L19 18Z" fill="#2f4f7a"/></svg><div style="position:absolute;left:1816.8px;top:719.1px;height:51.2px;font-size:25.6px;line-height:51.2px;color:#000;font-weight:normal;white-space:nowrap;">WMS/WMTS</div><svg style="position:absolute;left:1779.0px;top:763.7px" width="27" height="27" viewBox="0 0 27 27"><path d="M5 22C1 22 1 15 6 15C6 9 14 7 17 12C21 10 25 14 23 18C26 19 25 22 22 22Z" fill="#c8dcf0" stroke="#4a6a90" stroke-width="1.3"/></svg><div style="position:absolute;left:1816.8px;top:751.63px;height:51.2px;font-size:25.6px;line-height:51.2px;color:#000;font-weight:normal;white-space:nowrap;">Cloud</div><svg style="position:absolute;left:1756.0px;top:803.3px" width="7" height="13" viewBox="0 0 7 13"><path d="M0 0V13L7 6.5Z" fill="#555"/></svg><svg style="position:absolute;left:1779.0px;top:796.3px" width="27" height="27" viewBox="0 0 27 27"><rect x="2.0" y="2.0" width="6.5" height="6.5" fill="#6a98cc"/><rect x="2.0" y="10.5" width="6.5" height="6.5" fill="#6a98cc"/><rect x="2.0" y="19.0" width="6.5" height="6.5" fill="#6a98cc"/><rect x="10.5" y="2.0" width="6.5" height="6.5" fill="#6a98cc"/><rect x="10.5" y="10.5" width="6.5" height="6.5" fill="#6a98cc"/><rect x="10.5" y="19.0" width="6.5" height="6.5" fill="#6a98cc"/><rect x="19.0" y="2.0" width="6.5" height="6.5" fill="#6a98cc"/><rect x="19.0" y="10.5" width="6.5" height="6.5" fill="#6a98cc"/><rect x="19.0" y="19.0" width="6.5" height="6.5" fill="#6a98cc"/></svg><div style="position:absolute;left:1816.8px;top:784.16px;height:51.2px;font-size:25.6px;line-height:51.2px;color:#000;font-weight:normal;white-space:nowrap;">XYZ Tiles</div><svg style="position:absolute;left:1756.0px;top:835.8px" width="7" height="13" viewBox="0 0 7 13"><path d="M0 0V13L7 6.5Z" fill="#555"/></svg><svg style="position:absolute;left:1779.0px;top:828.8px" width="27" height="27" viewBox="0 0 27 27"><circle cx="13.5" cy="13.5" r="12" fill="#fff" stroke="#1f3a5f" stroke-width="2"/><ellipse cx="13.5" cy="13.5" rx="5.5" ry="12" fill="none" stroke="#1f3a5f" stroke-width="1.5"/><path d="M3 8.5H24M3 18.5H24" stroke="#1f3a5f" stroke-width="4"/><path d="M3 8.5H24M3 18.5H24" stroke="#6a98cc" stroke-width="2"/><path d="M1.5 13.5H25.5" stroke="#1f3a5f" stroke-width="1.5"/></svg><div style="position:absolute;left:1816.8px;top:816.6899999999999px;height:51.2px;font-size:25.6px;line-height:51.2px;color:#000;font-weight:normal;white-space:nowrap;">WCS</div><svg style="position:absolute;left:1756.0px;top:868.3px" width="7" height="13" viewBox="0 0 7 13"><path d="M0 0V13L7 6.5Z" fill="#555"/></svg><svg style="position:absolute;left:1779.0px;top:861.3px" width="27" height="27" viewBox="0 0 27 27"><circle cx="13.5" cy="13.5" r="12" fill="#e8f0fa" stroke="#6a98cc" stroke-width="1.2"/><path d="M1.5 13.5H25.5M13.5 1.5V25.5" stroke="#6a98cc"/><path d="M7 6L12 21L20 6" stroke="#2f4f7a" stroke-width="1.5" fill="none"/><circle cx="7" cy="6" r="2" fill="#fff" stroke="#2f4f7a"/><circle cx="20" cy="6" r="2" fill="#fff" stroke="#2f4f7a"/></svg><div style="position:absolute;left:1816.8px;top:849.2199999999999px;height:51.2px;font-size:25.6px;line-height:51.2px;color:#000;font-weight:normal;white-space:nowrap;">WFS / OGC API - Features</div><svg style="position:absolute;left:1756.0px;top:900.9px" width="7" height="13" viewBox="0 0 7 13"><path d="M0 0V13L7 6.5Z" fill="#555"/></svg><svg style="position:absolute;left:1779.0px;top:893.9px" width="27" height="27" viewBox="0 0 27 27"><circle cx="13.5" cy="13.5" r="12" fill="#e8f0fa" stroke="#6a98cc" stroke-width="1.2"/><path d="M1.5 13.5H25.5M13.5 1.5V25.5" stroke="#6a98cc"/><path d="M7 6L12 21L20 6" stroke="#2f4f7a" stroke-width="1.5" fill="none"/><circle cx="7" cy="6" r="2" fill="#fff" stroke="#2f4f7a"/><circle cx="20" cy="6" r="2" fill="#fff" stroke="#2f4f7a"/><circle cx="7" cy="20" r="5" fill="#444"/></svg><div style="position:absolute;left:1816.8px;top:881.75px;height:51.2px;font-size:25.6px;line-height:51.2px;color:#000;font-weight:normal;white-space:nowrap;">ArcGIS REST Servers</div><svg style="position:absolute;left:1756.0px;top:933.4px" width="7" height="13" viewBox="0 0 7 13"><path d="M0 0V13L7 6.5Z" fill="#555"/></svg><svg style="position:absolute;left:1779.0px;top:926.4px" width="27" height="27" viewBox="0 0 27 27"><rect x="1" y="1" width="25" height="25" fill="#8fd0b8"/><rect x="1" y="1" width="12" height="25" fill="#111"/><rect x="5" y="5" width="17" height="17" fill="#fff"/><path d="M13.5 7A6.5 6.5 0 0 1 13.5 20Z" fill="#111"/><path d="M13.5 7A6.5 6.5 0 0 0 13.5 20Z" fill="#3fa080"/></svg><div style="position:absolute;left:1816.8px;top:914.28px;height:51.2px;font-size:25.6px;line-height:51.2px;color:#000;font-weight:normal;white-space:nowrap;">Mergin Maps [LunaGeo-Demo]</div><svg style="position:absolute;left:1779.0px;top:958.9px" width="27" height="27" viewBox="0 0 27 27"><path d="M13.5 2L24 7V20L13.5 25L3 20V7Z" fill="#c8dcf0" stroke="#4a6a90" stroke-width="1.3"/><path d="M3 7L13.5 12L24 7M13.5 12V25" fill="none" stroke="#4a6a90" stroke-width="1.3"/></svg><div style="position:absolute;left:1816.8px;top:946.81px;height:51.2px;font-size:25.6px;line-height:51.2px;color:#000;font-weight:normal;white-space:nowrap;">Scenes</div><svg style="position:absolute;left:1779.0px;top:991.4px" width="27" height="27" viewBox="0 0 27 27"><circle cx="13.5" cy="13.5" r="4" fill="#3c5a80"/><path d="M8 7Q4 13.5 8 20M19 7Q23 13.5 19 20M4 4Q-2 13.5 4 23M23 4Q29 13.5 23 23" fill="none" stroke="#3c5a80" stroke-width="1.6"/></svg><div style="position:absolute;left:1816.8px;top:979.3399999999999px;height:51.2px;font-size:25.6px;line-height:51.2px;color:#000;font-weight:normal;white-space:nowrap;">SensorThings</div><svg style="position:absolute;left:1779.0px;top:1024.0px" width="27" height="27" viewBox="0 0 27 27"><rect x="2" y="2" width="23" height="23" fill="#fff" stroke="#2f4f7a" stroke-width="1.5"/><path d="M2 9.7H25M2 17.3H25M9.7 2V25M17.3 2V25" stroke="#2f4f7a" stroke-width="1.5"/><rect x="3" y="3" width="6" height="6" fill="#9ec0e6"/></svg><div style="position:absolute;left:1816.8px;top:1011.87px;height:51.2px;font-size:25.6px;line-height:51.2px;color:#000;font-weight:normal;white-space:nowrap;">Vector Tiles</div><div style="position:absolute;left:1884px;top:1640px;width:267px;height:42px;background:#dadada;border:1px solid #c4c4c4;border-radius:4px 4px 0 0;box-sizing:border-box"></div><div style="position:absolute;left:2151px;top:1640px;width:191px;height:42px;background:#dadada;border:1px solid #c4c4c4;border-radius:4px 4px 0 0;box-sizing:border-box"></div><div style="position:absolute;left:1745px;top:1636px;width:139px;height:50px;background:#f6f5f4;border:1px solid #c4c4c4;border-top:none;border-radius:0 0 4px 4px;box-sizing:border-box"></div><div style="position:absolute;left:1765.7px;top:1639.2px;height:51.6px;font-size:25.8px;line-height:51.6px;color:#000;font-weight:normal;white-space:nowrap;">Browser</div><div style="position:absolute;left:1904px;top:1639.2px;height:51.6px;font-size:25.8px;line-height:51.6px;color:#000;font-weight:normal;white-space:nowrap;">Processing Toolbox</div><div style="position:absolute;left:2171px;top:1639.2px;height:51.6px;font-size:25.8px;line-height:51.6px;color:#000;font-weight:normal;white-space:nowrap;">Layer Styling</div><div style="position:absolute;left:17px;top:1687px;width:2526px;height:54px;background:#efefef"></div><div style="position:absolute;left:24px;top:1694px;width:458px;height:41px;background:#fff;border:1.5px solid #b8b8b8;border-radius:5px;box-sizing:border-box"></div><svg style="position:absolute;left:39.5px;top:1703.5px" width="21" height="21" viewBox="0 0 21 21"><circle cx="8" cy="8" r="6.5" fill="none" stroke="#777" stroke-width="2"/><path d="M13 13L19 19" stroke="#777" stroke-width="2.5"/></svg><div style="position:absolute;left:74px;top:1688.6px;height:51.8px;font-size:25.9px;line-height:51.8px;color:#7a7a7a;font-weight:normal;white-space:nowrap;">Type to locate (Ctrl+K)</div><div style="position:absolute;left:975.3px;top:1694.1px;height:41.8px;font-size:20.9px;line-height:41.8px;color:#000;font-weight:normal;white-space:nowrap;">Coordinate</div><div style="position:absolute;left:1085px;top:1695px;width:192px;height:38px;background:#fff;border:1.5px solid #c0c0c0;border-radius:4px;box-sizing:border-box"></div><div style="position:absolute;left:1100.5px;top:1694.5px;height:41.0px;font-size:20.5px;line-height:41.0px;color:#000;font-weight:normal;white-space:nowrap;">490561, 4770037</div><svg style="position:absolute;left:1285.5px;top:1701.5px" width="25" height="25" viewBox="0 0 25 25"><ellipse cx="11" cy="11" rx="7" ry="9" fill="#444" stroke="#111"/><circle cx="12" cy="15" r="3" fill="#fff" stroke="#333"/><path d="M10 4V10" stroke="#fff" stroke-width="2"/><path d="M19 2L21 4M21 8L23 8" stroke="#555"/></svg><div style="position:absolute;left:1335px;top:1694.1px;height:41.8px;font-size:20.9px;line-height:41.8px;color:#000;font-weight:normal;white-space:nowrap;">Scale</div><div style="position:absolute;left:1390.5px;top:1694.5px;width:165px;height:39px;background:#fff;border:1.5px solid #c0c0c0;border-radius:4px;box-sizing:border-box"></div><div style="position:absolute;left:1520px;top:1696px;width:1px;height:36px;background:#d0d0d0"></div><div style="position:absolute;left:1521px;top:1696px;width:33px;height:36px;background:#f4f4f4"></div><div style="position:absolute;left:1397px;top:1694px;height:42px;font-size:21px;line-height:42px;color:#000;font-weight:normal;white-space:nowrap;">1:141347</div><svg style="position:absolute;left:1530.5px;top:1711.4px" width="12" height="7.199999999999999" viewBox="0 0 12 7.199999999999999"><path d="M0 0H12L6.0 6.6000000000000005Z" fill="#555"/></svg><svg style="position:absolute;left:1575.0px;top:1701.5px" width="22" height="25" viewBox="0 0 22 25"><path d="M5 10V7A6 6 0 0 1 17 7V10" fill="none" stroke="#666" stroke-width="2.5"/><rect x="2" y="10" width="18" height="14" rx="2" fill="#666"/></svg><div style="position:absolute;left:1612px;top:1694.1px;height:41.8px;font-size:20.9px;line-height:41.8px;color:#000;font-weight:normal;white-space:nowrap;">Magnifier</div><div style="position:absolute;left:1709px;top:1696px;width:159px;height:38px;background:#fff;border:1.5px solid #c0c0c0;border-radius:4px;box-sizing:border-box"></div><div style="position:absolute;left:1843px;top:1697px;width:1px;height:36px;background:#d0d0d0"></div><svg style="position:absolute;left:1849.5px;top:1701.0px" width="12" height="10" viewBox="0 0 12 10"><path d="M0 8L6 1L12 8Z" fill="#555"/></svg><svg style="position:absolute;left:1849.5px;top:1719.0px" width="12" height="10" viewBox="0 0 12 10"><path d="M0 2L6 9L12 2Z" fill="#555"/></svg><div style="position:absolute;left:1717.8px;top:1694.3px;height:41.4px;font-size:20.7px;line-height:41.4px;color:#000;font-weight:normal;white-space:nowrap;">100%</div><div style="position:absolute;left:1885.8px;top:1694.1px;height:41.8px;font-size:20.9px;line-height:41.8px;color:#000;font-weight:normal;white-space:nowrap;">Rotation</div><div style="position:absolute;left:1983px;top:1696px;width:160px;height:38px;background:#fff;border:1.5px solid #c0c0c0;border-radius:4px;box-sizing:border-box"></div><div style="position:absolute;left:2118px;top:1697px;width:1px;height:36px;background:#d0d0d0"></div><svg style="position:absolute;left:2124.5px;top:1701.0px" width="12" height="10" viewBox="0 0 12 10"><path d="M0 8L6 1L12 8Z" fill="#555"/></svg><svg style="position:absolute;left:2124.5px;top:1719.0px" width="12" height="10" viewBox="0 0 12 10"><path d="M0 2L6 9L12 2Z" fill="#555"/></svg><div style="position:absolute;left:1991.6px;top:1694.3px;height:41.4px;font-size:20.7px;line-height:41.4px;color:#000;font-weight:normal;white-space:nowrap;">0.0 °</div><svg style="position:absolute;left:2154.5px;top:1703.0px" width="23" height="23" viewBox="0 0 23 23"><rect x="1" y="1" width="21" height="21" fill="#fff" stroke="#b8b8b8" stroke-width="1.5"/><path d="M5.5 11.5L9.5 17L17 4.5" fill="none" stroke="#111" stroke-width="2.6"/></svg><div style="position:absolute;left:2187.8px;top:1694.8px;height:40.4px;font-size:20.2px;line-height:40.4px;color:#000;font-weight:normal;white-space:nowrap;">Render</div><svg style="position:absolute;left:2281.0px;top:1701.5px" width="26" height="26" viewBox="0 0 26 26"><circle cx="13" cy="13" r="11" fill="none" stroke="#555" stroke-width="1.6"/><ellipse cx="13" cy="13" rx="5" ry="11" fill="none" stroke="#555" stroke-width="1.4"/><path d="M2 13H24M4 7H22M4 19H22" stroke="#555" stroke-width="1.4"/></svg><div style="position:absolute;left:2312.5px;top:1696.0px;height:38.0px;font-size:19.0px;line-height:38.0px;color:#000;font-weight:normal;white-space:nowrap;">EPSG:26917</div><svg style="position:absolute;left:2463.5px;top:1700.5px" width="28" height="27" viewBox="0 0 28 27"><path d="M14 2C22 2 27 7 27 12C27 17 22 22 14 22L8 25L10 21C4 19 1 16 1 12C1 7 6 2 14 2Z" fill="#555"/><circle cx="8" cy="12" r="2" fill="#fff"/><circle cx="14" cy="12" r="2" fill="#fff"/><circle cx="20" cy="12" r="2" fill="#fff"/></svg><svg style="position:absolute;left:2524.0px;top:1721.0px" width="16" height="14" viewBox="0 0 16 14"><circle cx="12" cy="2" r="1" fill="#c0c0c0"/><circle cx="8" cy="6" r="1" fill="#c0c0c0"/><circle cx="12" cy="6" r="1" fill="#c0c0c0"/><circle cx="4" cy="10" r="1" fill="#c0c0c0"/><circle cx="8" cy="10" r="1" fill="#c0c0c0"/><circle cx="12" cy="10" r="1" fill="#c0c0c0"/></svg>
</body></html>
